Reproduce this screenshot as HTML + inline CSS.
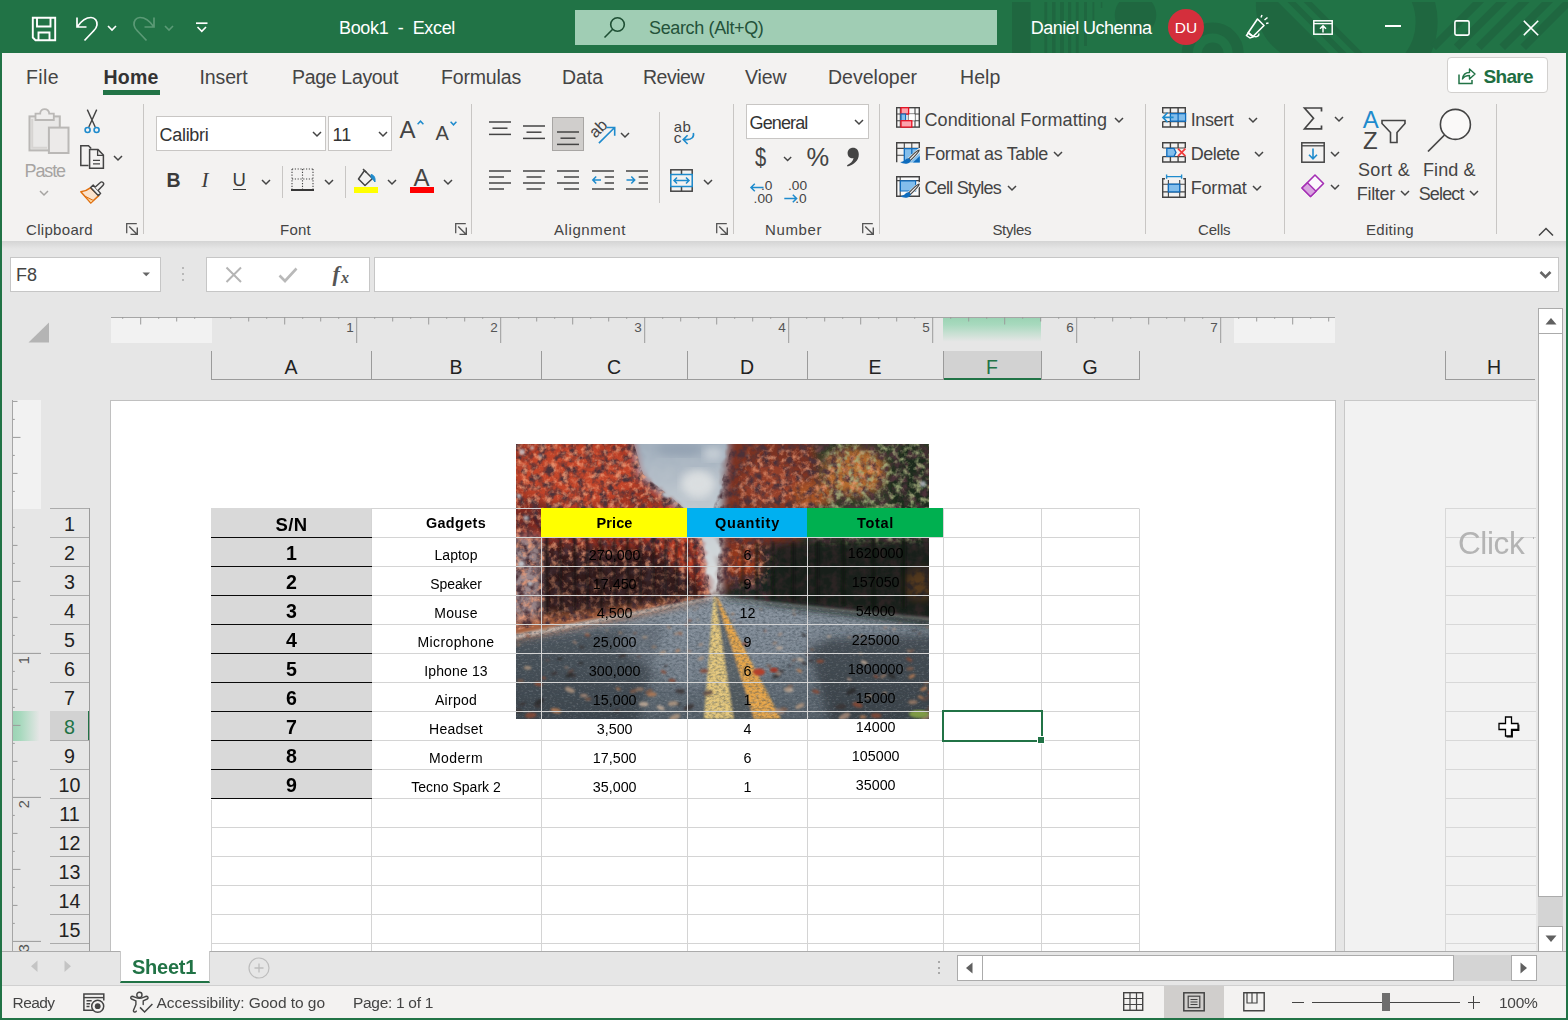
<!DOCTYPE html>
<html lang="en">
<head>
<meta charset="utf-8">
<title>Book1 - Excel</title>
<style>
*{box-sizing:border-box;margin:0;padding:0}
html,body{width:1568px;height:1020px;overflow:hidden;background:#e6e6e6}
body{font-family:"Liberation Sans",sans-serif;color:#444;position:relative}
.a{position:absolute}
.t{position:absolute;white-space:nowrap;line-height:1;color:#444}
svg{position:absolute;overflow:visible}
</style>
</head>
<body>
<!-- top -->
<div class="a" style="left:0px;top:0px;width:1568px;height:53px;background:#217346;"></div>
<svg style="left:0;top:0" width="1568" height="53" viewBox="0 0 1568 53"><defs><clipPath id="tc"><rect x="1000" y="2" width="568" height="51"/></clipPath><clipPath id="tc2"><rect x="1400" y="2" width="60" height="51"/></clipPath></defs><g clip-path="url(#tc)"><rect x="1012" y="2" width="18.5" height="51" fill="#1f6740"/><rect x="1044.4" y="2" width="2.8" height="51" fill="#1f6740"/><rect x="1052" y="2" width="3.5" height="51" fill="#1f6740"/><rect x="1060" y="2" width="3.8" height="51" fill="#1f6740"/><rect x="1068" y="2" width="3.2" height="51" fill="#1f6740"/><rect x="1075.8" y="2" width="2.8" height="51" fill="#1f6740"/><rect x="1084" y="2" width="3" height="44" fill="#1f6740"/><rect x="1092.5" y="2" width="1.8" height="18" fill="#1f6740"/><rect x="1100.8" y="2" width="1.5" height="6" fill="#1f6740"/><circle cx="1135.5" cy="15" r="20.8" fill="#1f6740"/><circle cx="1212.7" cy="53.6" r="11" fill="#1f6740"/><circle cx="1212.7" cy="53.6" r="25.5" fill="none" stroke="#1f6740" stroke-width="11"/><path d="M1256 2 H1278 L1329 53 H1281 C1262 40,1255 20,1256 2Z" fill="#1f6740"/><path d="M1287.5 2 h8 l51 51 h-8z" fill="#1f6740"/><path d="M1303.7 2 h8 l51 51 h-8z" fill="#1f6740"/><path d="M1363.6 -41 A63 63 0 0 1 1363.6 85" fill="none" stroke="#1f6740" stroke-width="22"/><path d="M1473 2 h11 l-48 48 l-5.5 -5.5z" fill="#1f6740"/><path d="M1496.4 2 h11 l-48 48 l-5.5 -5.5z" fill="#1f6740"/><path d="M1518.5 2 h11 l-48 48 l-5.5 -5.5z" fill="#1f6740"/><path d="M1542 2 h11 l-48 48 l-5.5 -5.5z" fill="#1f6740"/><path d="M1563 2 h11 l-48 48 l-5.5 -5.5z" fill="#1f6740"/></g></svg>
<svg style="left:32px;top:17px" width="24" height="24" viewBox="0 0 24 24"><path d="M0.8 0.8 H23.2 V23.2 H3.5 L0.8 20.5 Z M5 0.8 V9.5 H18.5 V0.8 M6.5 23 V15.5 H17.5 V23" fill="none" stroke="#fff" stroke-width="1.9"/></svg>
<svg style="left:75px;top:16px" width="24" height="26" viewBox="0 0 24 26"><path d="M2 1.5 V11 H11.5 M2.5 10.5 C7 4,12 1.5,16 1.5 C20 1.5,22.5 5,22 9 C21.7 12,20 13.5,18 15.5 L9.5 24.5" fill="none" stroke="#fff" stroke-width="1.7"/></svg>
<svg style="left:106.5px;top:25.0px" width="10" height="6" viewBox="0 0 10 6"><path d="M1 1 L5 5 L9 1" fill="none" stroke="#fff" stroke-width="1.6"/></svg>
<svg style="left:132px;top:16px" width="24" height="26" viewBox="0 0 24 26"><path d="M22 1.5 V11 H12.5 M21.5 10.5 C17 4,12 1.5,8 1.5 C4 1.5,1.5 5,2 9 C2.3 12,4 13.5,6 15.5 L14.5 24.5" fill="none" stroke="#5b9a76" stroke-width="1.7"/></svg>
<svg style="left:163.5px;top:25.0px" width="10" height="6" viewBox="0 0 10 6"><path d="M1 1 L5 5 L9 1" fill="none" stroke="#5b9a76" stroke-width="1.6"/></svg>
<svg style="left:196px;top:22px" width="12" height="11" viewBox="0 0 12 11"><path d="M0 1.2 H11.5" stroke="#fff" stroke-width="1.7"/><path d="M1.5 5 L5.8 9.3 L10 5" fill="none" stroke="#fff" stroke-width="1.6"/></svg>
<div class="t" style="left:339.00px;top:18.72px;font-size:18px;letter-spacing:-0.337px;color:#fff;white-space:pre;">Book1  -  Excel</div>
<div class="a" style="left:575px;top:10px;width:422px;height:35px;background:#a0cdb4;"></div>
<svg style="left:603px;top:16px" width="24" height="24" viewBox="0 0 24 24"><circle cx="14.5" cy="8.5" r="6.8" fill="none" stroke="#1e4e33" stroke-width="1.6"/><path d="M9.7 13.3 L1.5 21.5" stroke="#1e4e33" stroke-width="1.6"/></svg>
<div class="t" style="left:649.00px;top:18.72px;font-size:18px;letter-spacing:-0.360px;color:#24523a;">Search (Alt+Q)</div>
<div class="t" style="left:1030.80px;top:18.72px;font-size:18px;letter-spacing:-0.535px;color:#fff;">Daniel Uchenna</div>
<div class="a" style="left:1168px;top:9px;width:36px;height:36px;background:#d42f3c;border-radius:50%;"></div>
<div class="t" style="left:1174.81px;top:19.94px;font-size:15.5px;color:#fff;">DU</div>
<svg style="left:1244px;top:14px" width="26" height="26" viewBox="0 0 26 26"><path d="M4 19 L13.5 5 L20 11.5 L9 22.5 Z" fill="none" stroke="#fff" stroke-width="1.6" stroke-linejoin="round"/><path d="M2.5 21.5 L4.5 18.5 L9.5 22.8 L6 24 Z" fill="none" stroke="#fff" stroke-width="1.4"/><path d="M10 22 a3 3 0 0 0 5 -2.5" fill="none" stroke="#fff" stroke-width="1.4"/><path d="M17 3.5 L18 1 M20.5 6 L23.5 3.5 M22 9.5 L24.5 9" stroke="#fff" stroke-width="1.5"/></svg>
<svg style="left:1313px;top:20px" width="20" height="15" viewBox="0 0 20 15"><rect x="0.8" y="0.8" width="18.4" height="13.4" fill="none" stroke="#fff" stroke-width="1.5"/><path d="M0.8 3.6 H19.2" stroke="#fff" stroke-width="1.4"/><path d="M10 12.5 V6 M7 8.8 L10 5.8 L13 8.8" fill="none" stroke="#fff" stroke-width="1.5"/></svg>
<div class="a" style="left:1385px;top:25.3px;width:16px;height:1.5px;background:#fff;"></div>
<svg style="left:1454px;top:19.5px" width="16" height="16" viewBox="0 0 16 16"><rect x="0.9" y="0.9" width="14.2" height="14.2" rx="1.5" fill="none" stroke="#fff" stroke-width="1.6"/></svg>
<svg style="left:1523px;top:19.5px" width="16" height="16" viewBox="0 0 16 16"><path d="M0.8 0.8 L15.2 15.2 M15.2 0.8 L0.8 15.2" stroke="#fff" stroke-width="1.6"/></svg>
<div class="a" style="left:2px;top:53px;width:1564px;height:188px;background:#f3f2f1;"></div>
<div class="t" style="left:26.00px;top:68.48px;font-size:19.5px;letter-spacing:0.394px;">File</div>
<div class="t" style="left:199.50px;top:68.48px;font-size:19.5px;letter-spacing:-0.129px;">Insert</div>
<div class="t" style="left:292.00px;top:68.48px;font-size:19.5px;letter-spacing:-0.319px;">Page Layout</div>
<div class="t" style="left:441.00px;top:68.48px;font-size:19.5px;letter-spacing:-0.158px;">Formulas</div>
<div class="t" style="left:562.00px;top:68.48px;font-size:19.5px;letter-spacing:-0.048px;">Data</div>
<div class="t" style="left:643.00px;top:68.48px;font-size:19.5px;letter-spacing:-0.490px;">Review</div>
<div class="t" style="left:745.00px;top:68.48px;font-size:19.5px;letter-spacing:-0.104px;">View</div>
<div class="t" style="left:828.00px;top:68.48px;font-size:19.5px;letter-spacing:0.013px;">Developer</div>
<div class="t" style="left:960.00px;top:68.48px;font-size:19.5px;letter-spacing:0.098px;">Help</div>
<div class="t" style="left:103.50px;top:68.48px;font-size:19.5px;letter-spacing:0.205px;color:#333;font-weight:bold;">Home</div>
<div class="a" style="left:103px;top:90px;width:57px;height:5px;background:#217346;"></div>
<div class="a" style="left:1447px;top:57px;width:101px;height:36px;background:#fff;border:1px solid #d2d0ce;border-radius:4px;"></div>
<svg style="left:1458px;top:67px" width="18" height="18" viewBox="0 0 18 18"><path d="M1 7.5 V16.5 H14 V13" fill="none" stroke="#217346" stroke-width="1.5"/><path d="M4.5 12 C5 7.5,8 5.5,11.5 5.5 V2 L17 7 L11.5 12 V8.5 C8.5 8.5,6 9.5,4.5 12 Z" fill="none" stroke="#217346" stroke-width="1.4" stroke-linejoin="round"/></svg>
<div class="t" style="left:1483.50px;top:67.23px;font-size:19px;letter-spacing:-0.662px;color:#1e6e42;font-weight:bold;">Share</div>
<!-- ribbon -->
<div class="a" style="left:143px;top:104px;width:1px;height:130px;background:#c8c6c4;"></div>
<div class="a" style="left:471px;top:104px;width:1px;height:130px;background:#c8c6c4;"></div>
<div class="a" style="left:733px;top:104px;width:1px;height:130px;background:#c8c6c4;"></div>
<div class="a" style="left:879px;top:104px;width:1px;height:130px;background:#c8c6c4;"></div>
<div class="a" style="left:1145px;top:104px;width:1px;height:130px;background:#c8c6c4;"></div>
<div class="a" style="left:1284px;top:104px;width:1px;height:130px;background:#c8c6c4;"></div>
<div class="a" style="left:1496px;top:104px;width:1px;height:130px;background:#c8c6c4;"></div>
<svg style="left:28px;top:108px" width="42" height="46" viewBox="0 0 42 46"><rect x="1.5" y="8.4" width="30.3" height="34" fill="#e9e8e7" stroke="#bab8b6" stroke-width="2"/><path d="M4.2 11 V39.8 H19" fill="none" stroke="#d6d4d2" stroke-width="2"/><path d="M7.5 12 V5.6 H12.2 C12.2 -0.4,21.2 -0.4,21.2 5.6 H25.8 V12 Z" fill="#efeeed" stroke="#bab8b6" stroke-width="1.8"/><rect x="20.9" y="19.6" width="19.6" height="25.4" fill="#eceae9" stroke="#bab8b6" stroke-width="2"/></svg>
<div class="t" style="left:24.50px;top:162.22px;font-size:18px;letter-spacing:-1.106px;color:#a6a4a2;">Paste</div>
<svg style="left:39px;top:190.0px" width="10" height="6" viewBox="0 0 10 6"><path d="M1 1 L5 5 L9 1" fill="none" stroke="#a6a4a2" stroke-width="1.5"/></svg>
<svg style="left:84px;top:109px" width="16" height="25" viewBox="0 0 16 25"><path d="M3.3 0.6 L11.2 18 M12.7 0.6 L4.8 18" stroke="#444" stroke-width="1.4" fill="none"/><circle cx="3.6" cy="21" r="2.5" fill="none" stroke="#1e8bcd" stroke-width="1.6"/><circle cx="12.6" cy="21" r="2.5" fill="none" stroke="#1e8bcd" stroke-width="1.6"/></svg>
<svg style="left:80px;top:145px" width="25" height="24" viewBox="0 0 25 24"><path d="M8.5 20.6 H0.8 V0.8 H8.5 L11.2 3.5" fill="none" stroke="#444" stroke-width="1.5"/><path d="M9.6 4.6 H18 L23.4 10 V23.2 H9.6 Z" fill="#f3f2f1" stroke="#444" stroke-width="1.5"/><path d="M17.6 4.8 V10.4 H23.2" fill="none" stroke="#444" stroke-width="1.3"/><path d="M13 15.4 h7 M13 18.8 h7" stroke="#444" stroke-width="1.3"/></svg>
<svg style="left:113px;top:155.0px" width="10" height="6" viewBox="0 0 10 6"><path d="M1 1 L5 5 L9 1" fill="none" stroke="#444" stroke-width="1.5"/></svg>
<svg style="left:80px;top:181px" width="25" height="23" viewBox="0 0 25 23"><path d="M0.8 10.8 C4 10.5,7.5 9,10.3 6.8 L19 14.4 L10.8 22 Z" fill="#fbe3cc" stroke="#e0700f" stroke-width="1.5" stroke-linejoin="round"/><path d="M5.2 15.3 L13.5 19.5 L10.8 22 Z" fill="#fcd29a" stroke="#e0700f" stroke-width="1"/><path d="M10.6 6.4 L13.2 4 L20.6 12.4 L18.2 14.6 Z" fill="#f3f2f1" stroke="#444" stroke-width="1.4" stroke-linejoin="round"/><path d="M15 6.3 L20.3 1.6 a1.9 1.9 0 0 1 2.8 2.6 L18 9.6" fill="#f3f2f1" stroke="#444" stroke-width="1.4"/></svg>
<div class="t" style="left:26.00px;top:222.18px;font-size:15px;letter-spacing:0.311px;">Clipboard</div>
<svg style="left:126.3px;top:223.4px" width="12" height="12" viewBox="0 0 12 12"><path d="M0.7 10.3 V0.7 H10.8" fill="none" stroke="#555" stroke-width="1.3"/><path d="M3.2 3.4 L11 11.2 M11.3 4.6 V11.4 H4.5" fill="none" stroke="#555" stroke-width="1.4"/></svg>
<div class="a" style="left:156px;top:116px;width:170px;height:35px;background:#fff;border:1px solid #c8c6c4;"></div>
<div class="t" style="left:159.50px;top:126.22px;font-size:18px;letter-spacing:-0.288px;color:#333;">Calibri</div>
<svg style="left:312px;top:131.0px" width="10" height="6" viewBox="0 0 10 6"><path d="M1 1 L5 5 L9 1" fill="none" stroke="#444" stroke-width="1.5"/></svg>
<div class="a" style="left:328px;top:116px;width:64px;height:35px;background:#fff;border:1px solid #c8c6c4;"></div>
<div class="t" style="left:332.50px;top:126.22px;font-size:18px;color:#333;">11</div>
<svg style="left:377.5px;top:131.0px" width="10" height="6" viewBox="0 0 10 6"><path d="M1 1 L5 5 L9 1" fill="none" stroke="#444" stroke-width="1.5"/></svg>
<div class="t" style="left:399.50px;top:118.49px;font-size:24px;">A</div>
<svg style="left:417px;top:120px" width="7" height="5" viewBox="0 0 7 5"><path d="M0.6 4.2 L3.5 1.2 L6.4 4.2" fill="none" stroke="#1e8bcd" stroke-width="1.5"/></svg>
<div class="t" style="left:435.50px;top:122.84px;font-size:20px;">A</div>
<svg style="left:450px;top:121px" width="7" height="5" viewBox="0 0 7 5"><path d="M0.6 0.8 L3.5 3.8 L6.4 0.8" fill="none" stroke="#1e8bcd" stroke-width="1.5"/></svg>
<div class="t" style="left:166.50px;top:171.08px;font-size:19.5px;color:#3b3b3b;font-weight:bold;">B</div>
<div class="t" style="left:201.50px;top:170.35px;font-size:21px;color:#3b3b3b;font-style:italic;font-family:'Liberation Serif',sans-serif;">I</div>
<div class="t" style="left:232.50px;top:170.77px;font-size:18.5px;color:#3b3b3b;">U</div>
<div class="a" style="left:232.5px;top:189px;width:13.5px;height:1.4px;background:#3b3b3b;"></div>
<svg style="left:260.7px;top:179.0px" width="10" height="6" viewBox="0 0 10 6"><path d="M1 1 L5 5 L9 1" fill="none" stroke="#444" stroke-width="1.5"/></svg>
<div class="a" style="left:282px;top:166px;width:1px;height:32px;background:#c8c6c4;"></div>
<svg style="left:291px;top:168px" width="23" height="23" viewBox="0 0 23 23"><path d="M1 1 H22 M1 1 V21 M22 1 V21 M11.5 1 V21 M1 11 H22" fill="none" stroke="#444" stroke-width="1.1" stroke-dasharray="1.2 1.6"/><path d="M0 22 H23" stroke="#222" stroke-width="1.8"/></svg>
<svg style="left:324px;top:179.0px" width="10" height="6" viewBox="0 0 10 6"><path d="M1 1 L5 5 L9 1" fill="none" stroke="#444" stroke-width="1.5"/></svg>
<div class="a" style="left:345px;top:166px;width:1px;height:32px;background:#c8c6c4;"></div>
<svg style="left:354px;top:168px" width="25" height="26" viewBox="0 0 25 26"><path d="M10.5 2.5 L18.5 10.5 L11 17.5 L4.5 11 Z" fill="#f3f2f1" stroke="#444" stroke-width="1.5" stroke-linejoin="round"/><path d="M9 1 L12.5 4.5" stroke="#444" stroke-width="1.5"/><path d="M17 6.5 C20 7,21.5 9.5,21 14 C19 12,18.5 10,17 9.5 Z" fill="#1e8bcd" stroke="#1e8bcd" stroke-width="1"/><rect x="0" y="19" width="24" height="6" fill="#ffff00"/></svg>
<svg style="left:387px;top:179.0px" width="10" height="6" viewBox="0 0 10 6"><path d="M1 1 L5 5 L9 1" fill="none" stroke="#444" stroke-width="1.5"/></svg>
<div class="t" style="left:413.60px;top:166.29px;font-size:24px;">A</div>
<div class="a" style="left:410px;top:187px;width:24px;height:6px;background:#f00;"></div>
<svg style="left:443px;top:179.0px" width="10" height="6" viewBox="0 0 10 6"><path d="M1 1 L5 5 L9 1" fill="none" stroke="#444" stroke-width="1.5"/></svg>
<div class="t" style="left:280.00px;top:222.18px;font-size:15px;letter-spacing:0.246px;">Font</div>
<svg style="left:454.5px;top:223.4px" width="12" height="12" viewBox="0 0 12 12"><path d="M0.7 10.3 V0.7 H10.8" fill="none" stroke="#555" stroke-width="1.3"/><path d="M3.2 3.4 L11 11.2 M11.3 4.6 V11.4 H4.5" fill="none" stroke="#555" stroke-width="1.4"/></svg>
<svg style="left:489px;top:121px" width="23" height="15" viewBox="0 0 23 15"><path d="M0 1 h22" stroke="#444" stroke-width="1.5"/><path d="M3.5 7.2 h15" stroke="#444" stroke-width="1.5"/><path d="M0 13.4 h22" stroke="#444" stroke-width="1.5"/></svg>
<svg style="left:523px;top:125px" width="23" height="15" viewBox="0 0 23 15"><path d="M0 1 h22" stroke="#444" stroke-width="1.5"/><path d="M3.5 7.2 h15" stroke="#444" stroke-width="1.5"/><path d="M0 13.4 h22" stroke="#444" stroke-width="1.5"/></svg>
<div class="a" style="left:552px;top:117px;width:32px;height:34px;background:#d0cecc;border:1px solid #a8a6a4;"></div>
<svg style="left:557px;top:131px" width="23" height="15" viewBox="0 0 23 15"><path d="M0 1 h22" stroke="#444" stroke-width="1.5"/><path d="M3.5 7.2 h15" stroke="#444" stroke-width="1.5"/><path d="M0 13.4 h22" stroke="#444" stroke-width="1.5"/></svg>
<svg style="left:585px;top:115px" width="35" height="32" viewBox="585 115 35 32"><text transform="translate(595.6 138.8) rotate(-45)" font-family="Liberation Sans, sans-serif" font-size="16.3" fill="#444">ab</text><path d="M598.9 143.1 L614.4 127.8 M606.3 127.5 H614.7 V135.8" fill="none" stroke="#1e8bcd" stroke-width="1.6"/></svg>
<svg style="left:620px;top:131.5px" width="10" height="6" viewBox="0 0 10 6"><path d="M1 1 L5 5 L9 1" fill="none" stroke="#444" stroke-width="1.5"/></svg>
<div class="a" style="left:659px;top:112px;width:1px;height:91px;background:#c8c6c4;"></div>
<div class="t" style="left:673.80px;top:119.28px;font-size:15px;letter-spacing:0.257px;">ab</div>
<div class="t" style="left:673.80px;top:130.44px;font-size:15.5px;">c</div>
<svg style="left:682px;top:131px" width="13" height="14" viewBox="0 0 13 14"><path d="M11.3 2 C12.5 6,9.5 8.6,5 8.6 H1.5 M5.6 4.2 L1.2 8.6 L5.6 13" fill="none" stroke="#1e8bcd" stroke-width="1.6"/></svg>
<svg style="left:489px;top:170px" width="23" height="20" viewBox="0 0 23 20"><path d="M0 1 h22" stroke="#444" stroke-width="1.5"/><path d="M0 7 h15" stroke="#444" stroke-width="1.5"/><path d="M0 13 h22" stroke="#444" stroke-width="1.5"/><path d="M0 19 h15" stroke="#444" stroke-width="1.5"/></svg>
<svg style="left:523px;top:170px" width="23" height="20" viewBox="0 0 23 20"><path d="M0 1 h22" stroke="#444" stroke-width="1.5"/><path d="M3.5 7 h15" stroke="#444" stroke-width="1.5"/><path d="M0 13 h22" stroke="#444" stroke-width="1.5"/><path d="M3.5 19 h15" stroke="#444" stroke-width="1.5"/></svg>
<svg style="left:557px;top:170px" width="23" height="20" viewBox="0 0 23 20"><path d="M0 1 h22" stroke="#444" stroke-width="1.5"/><path d="M7 7 h15" stroke="#444" stroke-width="1.5"/><path d="M0 13 h22" stroke="#444" stroke-width="1.5"/><path d="M7 19 h15" stroke="#444" stroke-width="1.5"/></svg>
<svg style="left:592px;top:170px" width="23" height="20" viewBox="0 0 23 20"><path d="M0 1 h22" stroke="#444" stroke-width="1.5"/><path d="M12.7 7 h9.3" stroke="#444" stroke-width="1.5"/><path d="M12.7 13 h9.3" stroke="#444" stroke-width="1.5"/><path d="M0 19 h22" stroke="#444" stroke-width="1.5"/><path d="M9 10 H1 M4.2 6.5 L0.8 10 L4.2 13.5" fill="none" stroke="#1e8bcd" stroke-width="1.5"/></svg>
<svg style="left:626px;top:170px" width="23" height="20" viewBox="0 0 23 20"><path d="M0 1 h22" stroke="#444" stroke-width="1.5"/><path d="M12.7 7 h9.3" stroke="#444" stroke-width="1.5"/><path d="M12.7 13 h9.3" stroke="#444" stroke-width="1.5"/><path d="M0 19 h22" stroke="#444" stroke-width="1.5"/><path d="M0.5 10 H8.5 M5.3 6.5 L8.7 10 L5.3 13.5" fill="none" stroke="#1e8bcd" stroke-width="1.5"/></svg>
<svg style="left:670px;top:169px" width="23" height="23" viewBox="0 0 23 23"><rect x="0.8" y="0.8" width="21.4" height="21.4" fill="none" stroke="#444" stroke-width="1.5"/><path d="M11.5 0.8 V5.5 M11.5 17.5 V22.2" stroke="#444" stroke-width="1.5"/><rect x="0.8" y="5.5" width="21.4" height="12" fill="#f3f2f1" stroke="#1e8bcd" stroke-width="1.5"/><path d="M4 11.5 H19 M7 8.5 L4 11.5 L7 14.5 M16 8.5 L19 11.5 L16 14.5" fill="none" stroke="#1e8bcd" stroke-width="1.5"/></svg>
<svg style="left:703px;top:179.0px" width="10" height="6" viewBox="0 0 10 6"><path d="M1 1 L5 5 L9 1" fill="none" stroke="#444" stroke-width="1.5"/></svg>
<div class="t" style="left:554.00px;top:222.18px;font-size:15px;letter-spacing:0.589px;">Alignment</div>
<svg style="left:716.2px;top:223.4px" width="12" height="12" viewBox="0 0 12 12"><path d="M0.7 10.3 V0.7 H10.8" fill="none" stroke="#555" stroke-width="1.3"/><path d="M3.2 3.4 L11 11.2 M11.3 4.6 V11.4 H4.5" fill="none" stroke="#555" stroke-width="1.4"/></svg>
<div class="a" style="left:746px;top:104px;width:123px;height:35px;background:#fff;border:1px solid #c8c6c4;"></div>
<div class="t" style="left:749.50px;top:113.72px;font-size:18px;letter-spacing:-0.863px;color:#333;">General</div>
<svg style="left:854px;top:119.0px" width="10" height="6" viewBox="0 0 10 6"><path d="M1 1 L5 5 L9 1" fill="none" stroke="#444" stroke-width="1.5"/></svg>
<div class="t" style="left:755.30px;top:144.37px;font-size:26.5px;transform:scaleX(.76);transform-origin:0 50%;">$</div>
<svg style="left:783.4px;top:155.7px" width="9.2" height="5.6" viewBox="0 0 9.2 5.6"><path d="M1 1 L4.6 4.6 L8.2 1" fill="none" stroke="#444" stroke-width="1.4"/></svg>
<div class="t" style="left:806.50px;top:144.56px;font-size:25.5px;">%</div>
<svg style="left:846px;top:147px" width="14" height="21" viewBox="0 0 14 21"><path d="M7 0.8 C10.5 0.8,12.8 3.5,12.8 7.5 C12.8 13.5,8 17.5,1.5 19.6 L1 18.2 C4.5 16.5,7 14,7.6 11.2 C4.5 11.8,1.6 9.6,1.6 6.2 C1.6 3,4 0.8,7 0.8 Z" fill="#444"/></svg>
<div class="t" style="left:761.00px;top:179.41px;font-size:13.7px;">.0</div>
<div class="t" style="left:753.60px;top:191.61px;font-size:13.7px;">.00</div>
<svg style="left:750px;top:183px" width="14" height="9" viewBox="0 0 14 9"><path d="M13.5 4.5 H1 M4.8 0.8 L1 4.5 L4.8 8.2" fill="none" stroke="#1e8bcd" stroke-width="1.5"/></svg>
<div class="t" style="left:788.00px;top:179.41px;font-size:13.7px;">.00</div>
<div class="t" style="left:795.30px;top:191.61px;font-size:13.7px;">.0</div>
<svg style="left:784px;top:194px" width="14" height="9" viewBox="0 0 14 9"><path d="M0.3 4.5 H12.6 M8.8 0.8 L12.6 4.5 L8.8 8.2" fill="none" stroke="#1e8bcd" stroke-width="1.5"/></svg>
<div class="t" style="left:765.00px;top:222.18px;font-size:15px;letter-spacing:0.608px;">Number</div>
<svg style="left:862px;top:223.4px" width="12" height="12" viewBox="0 0 12 12"><path d="M0.7 10.3 V0.7 H10.8" fill="none" stroke="#555" stroke-width="1.3"/><path d="M3.2 3.4 L11 11.2 M11.3 4.6 V11.4 H4.5" fill="none" stroke="#555" stroke-width="1.4"/></svg>
<svg style="left:896px;top:107.3px" width="24" height="21" viewBox="0 0 24 21"><rect x="0.7" y="0.7" width="22.6" height="19.4" fill="#fafafa" stroke="#444" stroke-width="1.4"/><path d="M0.7 7 H23.3 M0.7 13.7 H23.3 M4.3 0.7 V20.1 M12.4 0.7 V20.1 M19 0.7 V20.1" stroke="#444" stroke-width="1.1"/><rect x="12.6" y="7.2" width="6.2" height="6.3" fill="#fff"/><rect x="5" y="0.7" width="7.6" height="6.3" fill="#fba3ac" stroke="#e81123" stroke-width="1.3"/><rect x="5" y="7" width="4.6" height="6.7" fill="#83beec" stroke="#0f6cbd" stroke-width="1.2"/><rect x="5" y="13.7" width="10.8" height="6.4" fill="#fba3ac" stroke="#e81123" stroke-width="1.3"/></svg>
<div class="t" style="left:924.50px;top:110.72px;font-size:18px;letter-spacing:0.064px;">Conditional Formatting</div>
<svg style="left:1113.5px;top:116.5px" width="10" height="6" viewBox="0 0 10 6"><path d="M1 1 L5 5 L9 1" fill="none" stroke="#444" stroke-width="1.5"/></svg>
<svg style="left:896px;top:141.6px" width="24" height="22" viewBox="0 0 24 22"><path d="M0.7 20.3 V0.7 H23.3 V6" fill="none" stroke="#444" stroke-width="1.4"/><path d="M0.7 6.4 H23.3 M0.7 13.2 H8 M8.3 0.7 V6.4 M15.8 0.7 V6.4" stroke="#444" stroke-width="1.1"/><path d="M8.3 6.6 H23.8 V20.6 H8.3Z" fill="#83beec"/><path d="M8.3 20.6 V6.6 H23.8 M15.8 6.6 V12" fill="none" stroke="#0f6cbd" stroke-width="1.3"/><path d="M17 20.6 L23.8 14 V20.6Z" fill="#0f6cbd"/><path d="M23.4 8.2 L13.4 17.6" stroke="#f3f2f1" stroke-width="4.2" stroke-linecap="round"/><path d="M23.2 8 C22 8.2,16 13.5,12.6 17.2 L14.2 18.6 C18 15,23 10,23.2 8Z" fill="#f3f2f1" stroke="#444" stroke-width="1.2" stroke-linejoin="round"/><path d="M12.8 16.2 C9.5 15.8,9.5 19.5,4.2 20 C7.5 22.6,14.6 22.4,14.8 17.9 Z" fill="#0f6cbd"/></svg>
<div class="t" style="left:924.50px;top:144.72px;font-size:18px;letter-spacing:-0.348px;">Format as Table</div>
<svg style="left:1053px;top:150.5px" width="10" height="6" viewBox="0 0 10 6"><path d="M1 1 L5 5 L9 1" fill="none" stroke="#444" stroke-width="1.5"/></svg>
<svg style="left:896px;top:175.5px" width="24" height="22" viewBox="0 0 24 22"><path d="M0.7 0.7 H23.3 V20.2 H0.7Z" fill="#fafafa" stroke="#444" stroke-width="1.4"/><path d="M0.7 4.6 H23.3 M4.2 0.7 V20.2" stroke="#444" stroke-width="1.1"/><path d="M4.4 4.8 H19.6 V15 H4.4Z" fill="#83beec" stroke="#0f6cbd" stroke-width="1.2"/><path d="M23.4 8.2 L13.4 17.6" stroke="#f3f2f1" stroke-width="4.2" stroke-linecap="round"/><path d="M23.2 8 C22 8.2,16 13.5,12.6 17.2 L14.2 18.6 C18 15,23 10,23.2 8Z" fill="#f3f2f1" stroke="#444" stroke-width="1.2" stroke-linejoin="round"/><path d="M12.8 16.2 C9.5 15.8,9.5 19.5,4.2 20 C7.5 22.6,14.6 22.4,14.8 17.9 Z" fill="#0f6cbd"/></svg>
<div class="t" style="left:924.50px;top:178.72px;font-size:18px;letter-spacing:-0.775px;">Cell Styles</div>
<svg style="left:1007px;top:184.5px" width="10" height="6" viewBox="0 0 10 6"><path d="M1 1 L5 5 L9 1" fill="none" stroke="#444" stroke-width="1.5"/></svg>
<div class="t" style="left:992.50px;top:222.18px;font-size:15px;letter-spacing:-0.392px;">Styles</div>
<svg style="left:1162px;top:107.3px" width="24" height="21" viewBox="0 0 24 21"><path d="M0.7 6 V0.7 H23.3 V6 M0.7 14.6 V20 H23.3 V14.6 M8.4 0.7 V6 M16.1 0.7 V6 M8.4 14.6 V20 M16.1 14.6 V20" fill="none" stroke="#444" stroke-width="1.4"/><path d="M0.7 6 H23.3 M0.7 14.6 H23.3" stroke="#444" stroke-width="1.2"/><rect x="8.4" y="6.6" width="15.2" height="7.6" fill="#83beec" stroke="#0f6cbd" stroke-width="1.3"/><path d="M16.1 6.6 V14.2" stroke="#0f6cbd" stroke-width="1.2"/><path d="M11.6 10.4 H1.2 M5.6 5.6 L0.9 10.4 L5.6 15.2" fill="none" stroke="#1e8bcd" stroke-width="1.6"/></svg>
<div class="t" style="left:1190.70px;top:110.72px;font-size:18px;letter-spacing:-0.370px;">Insert</div>
<svg style="left:1248px;top:116.5px" width="10" height="6" viewBox="0 0 10 6"><path d="M1 1 L5 5 L9 1" fill="none" stroke="#444" stroke-width="1.5"/></svg>
<svg style="left:1162px;top:141.5px" width="24" height="21" viewBox="0 0 24 21"><path d="M0.7 6 V0.7 H23.3 V6 M0.7 14.6 V20 H23.3 V14.6 M8.4 0.7 V6 M16.1 0.7 V6 M8.4 14.6 V20 M16.1 14.6 V20" fill="none" stroke="#444" stroke-width="1.4"/><path d="M0.7 6 H23.3 M0.7 14.6 H23.3" stroke="#444" stroke-width="1.2"/><path d="M4.8 6.4 H12 L14 10.4 L12 14.4 H4.8Z" fill="#83beec" stroke="#0f6cbd" stroke-width="1.3"/><path d="M16 6.6 L23.4 14.2 M23.4 6.6 L16 14.2" stroke="#f03a3a" stroke-width="1.7"/></svg>
<div class="t" style="left:1190.70px;top:144.72px;font-size:18px;letter-spacing:-0.522px;">Delete</div>
<svg style="left:1254px;top:150.5px" width="10" height="6" viewBox="0 0 10 6"><path d="M1 1 L5 5 L9 1" fill="none" stroke="#444" stroke-width="1.5"/></svg>
<svg style="left:1162px;top:173.6px" width="24" height="24" viewBox="0 0 24 24"><path d="M4.6 2.6 H19.6 M4.6 0.4 V4.8 M19.6 0.4 V4.8" stroke="#1e8bcd" stroke-width="1.4"/><path d="M3 4.7 H0.7 V23.3 H23.3 V4.7 H21.2" fill="none" stroke="#444" stroke-width="1.4"/><path d="M0.7 10.2 H23.3 M0.7 17.9 H23.3 M6.4 6 V23.3 M17.7 6 V23.3" stroke="#444" stroke-width="1.1"/><rect x="6.4" y="10.2" width="11.3" height="7.7" fill="#83beec" stroke="#0f6cbd" stroke-width="1.3"/></svg>
<div class="t" style="left:1190.70px;top:178.72px;font-size:18px;letter-spacing:-0.184px;">Format</div>
<svg style="left:1252px;top:184.5px" width="10" height="6" viewBox="0 0 10 6"><path d="M1 1 L5 5 L9 1" fill="none" stroke="#444" stroke-width="1.5"/></svg>
<div class="t" style="left:1198.00px;top:222.18px;font-size:15px;letter-spacing:-0.188px;">Cells</div>
<svg style="left:1303px;top:107px" width="20" height="23" viewBox="0 0 20 23"><path d="M18.5 4.5 V1 H1.5 L10.5 11.3 L1.5 21.8 H18.5 V18.5" fill="none" stroke="#444" stroke-width="1.7"/></svg>
<svg style="left:1334px;top:116.0px" width="10" height="6" viewBox="0 0 10 6"><path d="M1 1 L5 5 L9 1" fill="none" stroke="#444" stroke-width="1.5"/></svg>
<svg style="left:1301px;top:141.5px" width="24" height="21" viewBox="0 0 24 21"><rect x="0.8" y="0.8" width="22.4" height="19.4" fill="#f3f2f1" stroke="#444" stroke-width="1.5"/><path d="M0.8 3.8 H23.2" stroke="#444" stroke-width="1.3"/><path d="M12 6.5 V16.5 M8 12.8 L12 16.8 L16 12.8" fill="none" stroke="#1e8bcd" stroke-width="1.6"/></svg>
<svg style="left:1330px;top:150.5px" width="10" height="6" viewBox="0 0 10 6"><path d="M1 1 L5 5 L9 1" fill="none" stroke="#444" stroke-width="1.5"/></svg>
<svg style="left:1301px;top:174px" width="24" height="24" viewBox="0 0 24 24"><path d="M14 1 L22.5 9.5 L9.5 22.5 L1 14 Z" fill="#fbf8fc" stroke="#a42eb4" stroke-width="1.6" stroke-linejoin="round"/><path d="M6.5 8.8 L15 17.3 L9.5 22.5 L1 14 Z" fill="#d8a4e0" stroke="#a42eb4" stroke-width="1.4" stroke-linejoin="round"/></svg>
<svg style="left:1330px;top:184.0px" width="10" height="6" viewBox="0 0 10 6"><path d="M1 1 L5 5 L9 1" fill="none" stroke="#444" stroke-width="1.5"/></svg>
<div class="t" style="left:1362.80px;top:107.89px;font-size:24px;color:#1e8bcd;">A</div>
<div class="t" style="left:1363.00px;top:128.89px;font-size:24px;">Z</div>
<svg style="left:1381px;top:119px" width="25" height="25" viewBox="0 0 25 25"><path d="M1 1.5 H24 V4.5 L16 13.5 V23.5 H9.5 V13.5 L1 4.5 Z" fill="none" stroke="#444" stroke-width="1.6"/></svg>
<div class="t" style="left:1358.00px;top:160.72px;font-size:18px;letter-spacing:0.330px;">Sort &amp;</div>
<div class="t" style="left:1356.80px;top:184.72px;font-size:18px;letter-spacing:-0.333px;">Filter</div>
<svg style="left:1399.5px;top:189.5px" width="10" height="6" viewBox="0 0 10 6"><path d="M1 1 L5 5 L9 1" fill="none" stroke="#444" stroke-width="1.5"/></svg>
<svg style="left:1426px;top:108px" width="46" height="46" viewBox="0 0 46 46"><circle cx="29.4" cy="16.4" r="15" fill="#faf9f8" stroke="#444" stroke-width="1.6"/><path d="M18.5 27 L2 43.5" stroke="#444" stroke-width="1.7"/></svg>
<div class="t" style="left:1423.00px;top:160.72px;font-size:18px;letter-spacing:0.096px;">Find &amp;</div>
<div class="t" style="left:1418.70px;top:184.72px;font-size:18px;letter-spacing:-0.838px;">Select</div>
<svg style="left:1469px;top:189.5px" width="10" height="6" viewBox="0 0 10 6"><path d="M1 1 L5 5 L9 1" fill="none" stroke="#444" stroke-width="1.5"/></svg>
<div class="t" style="left:1366.00px;top:222.18px;font-size:15px;letter-spacing:0.305px;">Editing</div>
<svg style="left:1538px;top:227px" width="16" height="10" viewBox="0 0 16 10"><path d="M1 8.5 L8 1.5 L15 8.5" fill="none" stroke="#444" stroke-width="1.5"/></svg>
<div class="a" style="left:2px;top:241px;width:1564px;height:8px;background:linear-gradient(#d4d4d4,#e6e6e6);"></div>
<!-- fbar -->
<div class="a" style="left:10px;top:257px;width:151px;height:35px;background:#fff;border:1px solid #c6c6c6;"></div>
<div class="t" style="left:16.00px;top:266.22px;font-size:18px;letter-spacing:-0.003px;">F8</div>
<svg style="left:142px;top:272px" width="9" height="5" viewBox="0 0 9 5"><path d="M0.5 0.5 H8 L4.25 4.2 Z" fill="#666"/></svg>
<div class="a" style="left:181.5px;top:267px;width:2px;height:2px;background:#b8b8b8;"></div>
<div class="a" style="left:181.5px;top:273px;width:2px;height:2px;background:#b8b8b8;"></div>
<div class="a" style="left:181.5px;top:279px;width:2px;height:2px;background:#b8b8b8;"></div>
<div class="a" style="left:206px;top:257px;width:164px;height:35px;background:#fff;border:1px solid #c6c6c6;"></div>
<svg style="left:225px;top:266px" width="18" height="18" viewBox="0 0 18 18"><path d="M1.5 1.5 L16 16 M16 1.5 L1.5 16" stroke="#b4b4b4" stroke-width="2"/></svg>
<svg style="left:278px;top:266px" width="20" height="18" viewBox="0 0 20 18"><path d="M1.5 9.5 L7 15 L18.5 2.5" fill="none" stroke="#b9b9b9" stroke-width="2.6"/></svg>
<div class="t" style="left:332.50px;top:262.76px;font-size:22px;color:#555;font-weight:bold;font-style:italic;font-family:'Liberation Serif',sans-serif;">f</div>
<div class="t" style="left:341.00px;top:269.69px;font-size:16px;color:#555;font-weight:bold;font-style:italic;font-family:'Liberation Serif',sans-serif;">x</div>
<div class="a" style="left:374px;top:257px;width:1185px;height:35px;background:#fff;border:1px solid #c6c6c6;"></div>
<svg style="left:1539px;top:270px" width="13" height="10" viewBox="0 0 13 10"><path d="M1.5 2 L6.5 7 L11.5 2" fill="none" stroke="#666" stroke-width="2.6"/></svg>
<!-- sheet -->
<svg style="left:28px;top:322px" width="22" height="21" viewBox="0 0 22 21"><path d="M21 0.5 V20.5 H0.5 Z" fill="#b4b4b4"/></svg>
<div class="a" style="left:111px;top:317px;width:1224px;height:26px;background:#e6e6e6;"></div>
<div class="a" style="left:111px;top:317px;width:101px;height:26px;background:#f2f2f2;"></div>
<div class="a" style="left:1234px;top:317px;width:101px;height:26px;background:#f2f2f2;"></div>
<div class="a" style="left:943px;top:317px;width:98px;height:26px;background:linear-gradient(#9ad3b3,#a8d9be 30%,#e6e6e6 95%);"></div>
<div class="a" style="left:111px;top:317px;width:1224px;height:1px;background:#a6a6a6;"></div>
<svg style="left:0px;top:317px" width="1568" height="26" viewBox="0 0 1568 26"><path d="M122.7 0 v1.8" stroke="#9a9a9a" stroke-width="1"/><path d="M140.7 0 v7.5" stroke="#9a9a9a" stroke-width="1"/><path d="M158.7 0 v1.8" stroke="#9a9a9a" stroke-width="1"/><path d="M176.7 0 v4.5" stroke="#9a9a9a" stroke-width="1"/><path d="M194.7 0 v1.8" stroke="#9a9a9a" stroke-width="1"/><path d="M230.7 0 v1.8" stroke="#9a9a9a" stroke-width="1"/><path d="M248.7 0 v4.5" stroke="#9a9a9a" stroke-width="1"/><path d="M266.7 0 v1.8" stroke="#9a9a9a" stroke-width="1"/><path d="M284.7 0 v7.5" stroke="#9a9a9a" stroke-width="1"/><path d="M302.7 0 v1.8" stroke="#9a9a9a" stroke-width="1"/><path d="M320.7 0 v4.5" stroke="#9a9a9a" stroke-width="1"/><path d="M338.7 0 v1.8" stroke="#9a9a9a" stroke-width="1"/><path d="M356.7 0 v26" stroke="#9a9a9a" stroke-width="1"/><path d="M374.7 0 v1.8" stroke="#9a9a9a" stroke-width="1"/><path d="M392.7 0 v4.5" stroke="#9a9a9a" stroke-width="1"/><path d="M410.7 0 v1.8" stroke="#9a9a9a" stroke-width="1"/><path d="M428.7 0 v7.5" stroke="#9a9a9a" stroke-width="1"/><path d="M446.7 0 v1.8" stroke="#9a9a9a" stroke-width="1"/><path d="M464.7 0 v4.5" stroke="#9a9a9a" stroke-width="1"/><path d="M482.7 0 v1.8" stroke="#9a9a9a" stroke-width="1"/><path d="M500.7 0 v26" stroke="#9a9a9a" stroke-width="1"/><path d="M518.7 0 v1.8" stroke="#9a9a9a" stroke-width="1"/><path d="M536.7 0 v4.5" stroke="#9a9a9a" stroke-width="1"/><path d="M554.7 0 v1.8" stroke="#9a9a9a" stroke-width="1"/><path d="M572.7 0 v7.5" stroke="#9a9a9a" stroke-width="1"/><path d="M590.7 0 v1.8" stroke="#9a9a9a" stroke-width="1"/><path d="M608.7 0 v4.5" stroke="#9a9a9a" stroke-width="1"/><path d="M626.7 0 v1.8" stroke="#9a9a9a" stroke-width="1"/><path d="M644.7 0 v26" stroke="#9a9a9a" stroke-width="1"/><path d="M662.7 0 v1.8" stroke="#9a9a9a" stroke-width="1"/><path d="M680.7 0 v4.5" stroke="#9a9a9a" stroke-width="1"/><path d="M698.7 0 v1.8" stroke="#9a9a9a" stroke-width="1"/><path d="M716.7 0 v7.5" stroke="#9a9a9a" stroke-width="1"/><path d="M734.7 0 v1.8" stroke="#9a9a9a" stroke-width="1"/><path d="M752.7 0 v4.5" stroke="#9a9a9a" stroke-width="1"/><path d="M770.7 0 v1.8" stroke="#9a9a9a" stroke-width="1"/><path d="M788.7 0 v26" stroke="#9a9a9a" stroke-width="1"/><path d="M806.7 0 v1.8" stroke="#9a9a9a" stroke-width="1"/><path d="M824.7 0 v4.5" stroke="#9a9a9a" stroke-width="1"/><path d="M842.7 0 v1.8" stroke="#9a9a9a" stroke-width="1"/><path d="M860.7 0 v7.5" stroke="#9a9a9a" stroke-width="1"/><path d="M878.7 0 v1.8" stroke="#9a9a9a" stroke-width="1"/><path d="M896.7 0 v4.5" stroke="#9a9a9a" stroke-width="1"/><path d="M914.7 0 v1.8" stroke="#9a9a9a" stroke-width="1"/><path d="M932.7 0 v26" stroke="#9a9a9a" stroke-width="1"/><path d="M950.7 0 v1.8" stroke="#9a9a9a" stroke-width="1"/><path d="M968.7 0 v4.5" stroke="#9a9a9a" stroke-width="1"/><path d="M986.7 0 v1.8" stroke="#9a9a9a" stroke-width="1"/><path d="M1004.7 0 v7.5" stroke="#9a9a9a" stroke-width="1"/><path d="M1022.7 0 v1.8" stroke="#9a9a9a" stroke-width="1"/><path d="M1040.7 0 v4.5" stroke="#9a9a9a" stroke-width="1"/><path d="M1058.7 0 v1.8" stroke="#9a9a9a" stroke-width="1"/><path d="M1076.7 0 v26" stroke="#9a9a9a" stroke-width="1"/><path d="M1094.7 0 v1.8" stroke="#9a9a9a" stroke-width="1"/><path d="M1112.7 0 v4.5" stroke="#9a9a9a" stroke-width="1"/><path d="M1130.7 0 v1.8" stroke="#9a9a9a" stroke-width="1"/><path d="M1148.7 0 v7.5" stroke="#9a9a9a" stroke-width="1"/><path d="M1166.7 0 v1.8" stroke="#9a9a9a" stroke-width="1"/><path d="M1184.7 0 v4.5" stroke="#9a9a9a" stroke-width="1"/><path d="M1202.7 0 v1.8" stroke="#9a9a9a" stroke-width="1"/><path d="M1220.7 0 v26" stroke="#9a9a9a" stroke-width="1"/><path d="M1238.7 0 v1.8" stroke="#9a9a9a" stroke-width="1"/><path d="M1256.7 0 v4.5" stroke="#9a9a9a" stroke-width="1"/><path d="M1274.7 0 v1.8" stroke="#9a9a9a" stroke-width="1"/><path d="M1292.7 0 v7.5" stroke="#9a9a9a" stroke-width="1"/><path d="M1310.7 0 v1.8" stroke="#9a9a9a" stroke-width="1"/><path d="M1328.7 0 v4.5" stroke="#9a9a9a" stroke-width="1"/></svg>
<div class="t" style="left:346.19px;top:320.91px;font-size:13.5px;color:#555;">1</div>
<div class="t" style="left:490.19px;top:320.91px;font-size:13.5px;color:#555;">2</div>
<div class="t" style="left:634.19px;top:320.91px;font-size:13.5px;color:#555;">3</div>
<div class="t" style="left:778.19px;top:320.91px;font-size:13.5px;color:#555;">4</div>
<div class="t" style="left:922.19px;top:320.91px;font-size:13.5px;color:#555;">5</div>
<div class="t" style="left:1066.19px;top:320.91px;font-size:13.5px;color:#555;">6</div>
<div class="t" style="left:1210.19px;top:320.91px;font-size:13.5px;color:#555;">7</div>
<div class="t" style="left:284.50px;top:358.48px;font-size:19.5px;color:#222;">A</div>
<div class="t" style="left:449.50px;top:358.48px;font-size:19.5px;color:#222;">B</div>
<div class="t" style="left:606.96px;top:358.48px;font-size:19.5px;color:#222;">C</div>
<div class="t" style="left:739.96px;top:358.48px;font-size:19.5px;color:#222;">D</div>
<div class="t" style="left:868.50px;top:358.48px;font-size:19.5px;color:#222;">E</div>
<div class="a" style="left:943px;top:351px;width:98px;height:28px;background:#d2d2d2;"></div>
<div class="a" style="left:943px;top:377.5px;width:99px;height:2.5px;background:#217346;"></div>
<div class="t" style="left:986.04px;top:358.48px;font-size:19.5px;color:#217346;">F</div>
<div class="t" style="left:1082.41px;top:358.48px;font-size:19.5px;color:#222;">G</div>
<div class="a" style="left:211px;top:379px;width:732px;height:1px;background:#9b9b9b;"></div>
<div class="a" style="left:1041px;top:379px;width:99px;height:1px;background:#9b9b9b;"></div>
<div class="a" style="left:211px;top:351px;width:1px;height:29px;background:#9b9b9b;"></div>
<div class="a" style="left:371px;top:351px;width:1px;height:29px;background:#9b9b9b;"></div>
<div class="a" style="left:541px;top:351px;width:1px;height:29px;background:#9b9b9b;"></div>
<div class="a" style="left:687px;top:351px;width:1px;height:29px;background:#9b9b9b;"></div>
<div class="a" style="left:807px;top:351px;width:1px;height:29px;background:#9b9b9b;"></div>
<div class="a" style="left:943px;top:351px;width:1px;height:29px;background:#9b9b9b;"></div>
<div class="a" style="left:1041px;top:351px;width:1px;height:29px;background:#9b9b9b;"></div>
<div class="a" style="left:1139px;top:351px;width:1px;height:29px;background:#9b9b9b;"></div>
<div class="a" style="left:1445px;top:351px;width:1px;height:29px;background:#9b9b9b;"></div>
<div class="a" style="left:1445px;top:379px;width:90px;height:1px;background:#9b9b9b;"></div>
<div class="t" style="left:1486.96px;top:358.48px;font-size:19.5px;color:#222;">H</div>
<div class="a" style="left:110px;top:400px;width:1226px;height:552px;background:#fff;border:1px solid #c0c0c0;border-bottom:none;"></div>
<div class="a" style="left:1344px;top:400px;width:192px;height:552px;background:#f2f2f2;border:1px solid #c8c8c8;border-bottom:none;border-right:none;"></div>
<div class="a" style="left:12px;top:400px;width:29px;height:551px;background:#e6e6e6;"></div>
<div class="a" style="left:12px;top:400px;width:29px;height:109px;background:#f2f2f2;"></div>
<div class="a" style="left:12px;top:710.5px;width:29px;height:30px;background:linear-gradient(90deg,#9ad3b3,#a8d9be 30%,#e6e6e6 95%);"></div>
<div class="a" style="left:12px;top:400px;width:1px;height:551px;background:#a6a6a6;"></div>
<svg style="left:13px;top:0px" width="28" height="951" viewBox="0 0 28 951"><path d="M0 401.4 h4.5" stroke="#9a9a9a" stroke-width="1"/><path d="M0 419.4 h1.8" stroke="#9a9a9a" stroke-width="1"/><path d="M0 437.4 h7.5" stroke="#9a9a9a" stroke-width="1"/><path d="M0 455.4 h1.8" stroke="#9a9a9a" stroke-width="1"/><path d="M0 473.4 h4.5" stroke="#9a9a9a" stroke-width="1"/><path d="M0 491.4 h1.8" stroke="#9a9a9a" stroke-width="1"/><path d="M0 527.4 h1.8" stroke="#9a9a9a" stroke-width="1"/><path d="M0 545.4 h4.5" stroke="#9a9a9a" stroke-width="1"/><path d="M0 563.4 h1.8" stroke="#9a9a9a" stroke-width="1"/><path d="M0 581.4 h7.5" stroke="#9a9a9a" stroke-width="1"/><path d="M0 599.4 h1.8" stroke="#9a9a9a" stroke-width="1"/><path d="M0 617.4 h4.5" stroke="#9a9a9a" stroke-width="1"/><path d="M0 635.4 h1.8" stroke="#9a9a9a" stroke-width="1"/><path d="M0 653.4 h28" stroke="#9a9a9a" stroke-width="1"/><path d="M0 671.4 h1.8" stroke="#9a9a9a" stroke-width="1"/><path d="M0 689.4 h4.5" stroke="#9a9a9a" stroke-width="1"/><path d="M0 707.4 h1.8" stroke="#9a9a9a" stroke-width="1"/><path d="M0 725.4 h7.5" stroke="#9a9a9a" stroke-width="1"/><path d="M0 743.4 h1.8" stroke="#9a9a9a" stroke-width="1"/><path d="M0 761.4 h4.5" stroke="#9a9a9a" stroke-width="1"/><path d="M0 779.4 h1.8" stroke="#9a9a9a" stroke-width="1"/><path d="M0 797.4 h28" stroke="#9a9a9a" stroke-width="1"/><path d="M0 815.4 h1.8" stroke="#9a9a9a" stroke-width="1"/><path d="M0 833.4 h4.5" stroke="#9a9a9a" stroke-width="1"/><path d="M0 851.4 h1.8" stroke="#9a9a9a" stroke-width="1"/><path d="M0 869.4 h7.5" stroke="#9a9a9a" stroke-width="1"/><path d="M0 887.4 h1.8" stroke="#9a9a9a" stroke-width="1"/><path d="M0 905.4 h4.5" stroke="#9a9a9a" stroke-width="1"/><path d="M0 923.4 h1.8" stroke="#9a9a9a" stroke-width="1"/><path d="M0 941.4 h28" stroke="#9a9a9a" stroke-width="1"/></svg>
<div class="t" style="left:17px;top:653.4px;font-size:14.5px;color:#555;transform:rotate(-90deg);transform-origin:50% 50%;width:14px;text-align:center">1</div>
<div class="t" style="left:17px;top:797.4px;font-size:14.5px;color:#555;transform:rotate(-90deg);transform-origin:50% 50%;width:14px;text-align:center">2</div>
<div class="t" style="left:17px;top:941.4px;font-size:14.5px;color:#555;transform:rotate(-90deg);transform-origin:50% 50%;width:14px;text-align:center">3</div>
<div class="a" style="left:50px;top:537px;width:39px;height:1px;background:#ababab;"></div>
<div class="t" style="left:64.02px;top:515.19px;font-size:19.7px;color:#222;">1</div>
<div class="a" style="left:50px;top:566px;width:39px;height:1px;background:#ababab;"></div>
<div class="t" style="left:64.02px;top:544.19px;font-size:19.7px;color:#222;">2</div>
<div class="a" style="left:50px;top:595px;width:39px;height:1px;background:#ababab;"></div>
<div class="t" style="left:64.02px;top:573.19px;font-size:19.7px;color:#222;">3</div>
<div class="a" style="left:50px;top:624px;width:39px;height:1px;background:#ababab;"></div>
<div class="t" style="left:64.02px;top:602.19px;font-size:19.7px;color:#222;">4</div>
<div class="a" style="left:50px;top:653px;width:39px;height:1px;background:#ababab;"></div>
<div class="t" style="left:64.02px;top:631.19px;font-size:19.7px;color:#222;">5</div>
<div class="a" style="left:50px;top:682px;width:39px;height:1px;background:#ababab;"></div>
<div class="t" style="left:64.02px;top:660.19px;font-size:19.7px;color:#222;">6</div>
<div class="a" style="left:50px;top:711px;width:39px;height:1px;background:#ababab;"></div>
<div class="t" style="left:64.02px;top:689.19px;font-size:19.7px;color:#222;">7</div>
<div class="a" style="left:50px;top:711px;width:39px;height:29px;background:#d2d2d2;"></div>
<div class="a" style="left:87.5px;top:711px;width:2.5px;height:30px;background:#217346;"></div>
<div class="a" style="left:50px;top:740px;width:39px;height:1px;background:#ababab;"></div>
<div class="t" style="left:64.02px;top:718.19px;font-size:19.7px;color:#217346;">8</div>
<div class="a" style="left:50px;top:769px;width:39px;height:1px;background:#ababab;"></div>
<div class="t" style="left:64.02px;top:747.19px;font-size:19.7px;color:#222;">9</div>
<div class="a" style="left:50px;top:798px;width:39px;height:1px;background:#ababab;"></div>
<div class="t" style="left:58.54px;top:776.19px;font-size:19.7px;color:#222;">10</div>
<div class="a" style="left:50px;top:827px;width:39px;height:1px;background:#ababab;"></div>
<div class="t" style="left:59.27px;top:805.19px;font-size:19.7px;color:#222;">11</div>
<div class="a" style="left:50px;top:856px;width:39px;height:1px;background:#ababab;"></div>
<div class="t" style="left:58.54px;top:834.19px;font-size:19.7px;color:#222;">12</div>
<div class="a" style="left:50px;top:885px;width:39px;height:1px;background:#ababab;"></div>
<div class="t" style="left:58.54px;top:863.19px;font-size:19.7px;color:#222;">13</div>
<div class="a" style="left:50px;top:914px;width:39px;height:1px;background:#ababab;"></div>
<div class="t" style="left:58.54px;top:892.19px;font-size:19.7px;color:#222;">14</div>
<div class="a" style="left:50px;top:943px;width:39px;height:1px;background:#ababab;"></div>
<div class="t" style="left:58.54px;top:921.19px;font-size:19.7px;color:#222;">15</div>
<div class="a" style="left:50px;top:972px;width:39px;height:1px;background:#ababab;"></div>
<div class="a" style="left:50px;top:508px;width:39px;height:1px;background:#ababab;"></div>
<div class="a" style="left:89px;top:508px;width:1px;height:443px;background:#9b9b9b;"></div>
<svg style="left:516px;top:444px" width="413" height="275" viewBox="0 0 413 275"><defs>
<filter id="b6" x="-10%" y="-10%" width="120%" height="120%"><feGaussianBlur stdDeviation="4"/></filter>
<filter id="b3" x="-10%" y="-10%" width="120%" height="120%"><feGaussianBlur stdDeviation="2"/></filter>
<filter id="rough" x="-10%" y="-10%" width="120%" height="120%"><feTurbulence type="fractalNoise" baseFrequency="0.09" numOctaves="3" seed="8" result="t"/><feDisplacementMap in="SourceGraphic" in2="t" scale="16" xChannelSelector="R" yChannelSelector="G"/><feGaussianBlur stdDeviation="0.9"/></filter>
<filter id="b1" x="-10%" y="-10%" width="120%" height="120%"><feGaussianBlur stdDeviation="0.8"/></filter>
<filter id="nzD" x="0" y="0" width="100%" height="100%"><feTurbulence type="fractalNoise" baseFrequency="0.13" numOctaves="3" seed="4"/><feColorMatrix type="matrix" values="0 0 0 0 0.07  0 0 0 0 0.03  0 0 0 0 0.04  2.8 0 0 0 -1.1"/><feGaussianBlur stdDeviation="0.5"/></filter>
<filter id="nzL" x="0" y="0" width="100%" height="100%"><feTurbulence type="fractalNoise" baseFrequency="0.17" numOctaves="3" seed="11"/><feColorMatrix type="matrix" values="0 0 0 0 .90  0 0 0 0 .36  0 0 0 0 .20  0 3 0 0 -1.4"/><feGaussianBlur stdDeviation="0.5"/></filter>
<filter id="nzG" x="0" y="0" width="100%" height="100%"><feTurbulence type="fractalNoise" baseFrequency="0.15" numOctaves="3" seed="23"/><feColorMatrix type="matrix" values="0 0 0 0 .40  0 0 0 0 .46  0 0 0 0 .22  0 0 3 0 -1.35"/><feGaussianBlur stdDeviation="0.5"/></filter>
<filter id="nzR" x="0" y="0" width="100%" height="100%"><feTurbulence type="fractalNoise" baseFrequency="0.3 0.5" numOctaves="2" seed="5"/><feColorMatrix type="matrix" values="0 0 0 0 0.05  0 0 0 0 0.07  0 0 0 0 0.09  2.4 0 0 0 -0.95"/></filter>
<filter id="nzW" x="0" y="0" width="100%" height="100%"><feTurbulence type="fractalNoise" baseFrequency="0.35 0.6" numOctaves="2" seed="9"/><feColorMatrix type="matrix" values="0 0 0 0 .8  0 0 0 0 .84  0 0 0 0 .88  0 2.4 0 0 -1.25"/></filter>
<linearGradient id="road" x1="0" y1="0" x2="0" y2="1"><stop offset="0" stop-color="#96a0aa"/><stop offset=".3" stop-color="#7c8792"/><stop offset="1" stop-color="#566069"/></linearGradient>
<linearGradient id="sky" x1="0" y1="0" x2="0" y2="1"><stop offset="0" stop-color="#9dabba"/><stop offset=".4" stop-color="#bcc5cd"/><stop offset="1" stop-color="#dfe2e2"/></linearGradient>
<clipPath id="pc"><rect x="0" y="0" width="413" height="275"/></clipPath>
<clipPath id="cL"><path d="M0 0 H118 L127 30 L168 64 L186 94 L196 152 L150 162 L0 186Z"/></clipPath>
<clipPath id="cR"><path d="M216 0 H413 V176 L300 163 L200 152 L203 94 L197 64 L208 30Z"/></clipPath>
<mask id="mRg"><path d="M312 -10 H423 V100 L300 100 Z" fill="#fff" filter="url(#b6)"/></mask><mask id="mRo"><ellipse cx="270" cy="42" rx="50" ry="48" fill="#fff" filter="url(#b6)"/><ellipse cx="232" cy="118" rx="24" ry="26" fill="#fff" filter="url(#b6)"/><ellipse cx="340" cy="28" rx="30" ry="24" fill="#fff" filter="url(#b6)"/></mask>
<clipPath id="cRoad"><path d="M0 190 L196 152 L204 152 L413 176 V275 H0Z"/></clipPath>
</defs><g clip-path="url(#pc)"><rect width="413" height="275" fill="#3a2a26"/><rect x="0" y="150" width="413" height="125" fill="url(#road)"/><g filter="url(#b6)"><path d="M-10 196 L150 178 L120 285 L-10 285Z" fill="#272d34" opacity=".55"/><path d="M423 190 L290 196 L315 285 L423 285Z" fill="#2b3137" opacity=".65"/><path d="M140 160 L199 150 L270 160 L310 196 L230 240 L160 240 L100 200Z" fill="#8994a0" opacity=".5"/></g><g filter="url(#b6)"><path d="M105 -10 L220 -10 L206 60 L204 152 L195 152 L185 95 L162 62 L122 30Z" fill="url(#sky)"/><ellipse cx="178" cy="34" rx="22" ry="14" fill="#dde1e4"/><ellipse cx="150" cy="10" rx="24" ry="8" fill="#9fadbc"/><ellipse cx="190" cy="6" rx="18" ry="7" fill="#d4dadf"/><path d="M-10 -10 L116 -10 L124 30 L162 62 L187 96 L196 152 L150 160 L-10 185Z" fill="#a33422"/><ellipse cx="60" cy="30" rx="62" ry="30" fill="#c2452b"/><ellipse cx="150" cy="84" rx="30" ry="20" fill="#c0432a"/><ellipse cx="172" cy="112" rx="18" ry="16" fill="#b83c26"/><ellipse cx="20" cy="72" rx="28" ry="16" fill="#7a2a20"/><path d="M22 98 L140 104 L180 136 L192 156 L60 174 L22 176Z" fill="#2c1c1e" opacity=".88"/><path d="M-10 92 L24 94 L24 186 L-10 190Z" fill="#9a878b"/><path d="M-5 176 L150 158 L196 152 L150 165 L-5 196Z" fill="#a8603c"/><path d="M214 -10 L423 -10 L423 180 L203 152 L205 60Z" fill="#2d3926"/><path d="M212 -10 L296 -10 L304 56 L276 108 L232 134 L203 150 L205 60Z" fill="#7a3220"/><ellipse cx="255" cy="40" rx="28" ry="22" fill="#96402a"/><ellipse cx="338" cy="28" rx="30" ry="22" fill="#b36a2d"/><ellipse cx="296" cy="50" rx="20" ry="12" fill="#a85528"/><ellipse cx="398" cy="40" rx="26" ry="40" fill="#1f2a1c"/><ellipse cx="345" cy="78" rx="44" ry="14" fill="#3c4c2c"/><path d="M236 100 L423 95 L423 182 L300 166 L205 153Z" fill="#1c2622" opacity=".93"/><ellipse cx="404" cy="140" rx="14" ry="14" fill="#b4662c"/><ellipse cx="228" cy="118" rx="16" ry="16" fill="#98381f"/></g><g clip-path="url(#cL)"><rect width="413" height="190" filter="url(#nzD)"/><rect width="413" height="190" filter="url(#nzL)" opacity=".75"/></g><g clip-path="url(#cR)"><rect width="413" height="190" filter="url(#nzD)"/><g mask="url(#mRo)"><rect width="413" height="190" filter="url(#nzL)" opacity=".65"/></g></g><g mask="url(#mRg)"><rect width="413" height="110" filter="url(#nzG)" opacity=".8"/></g><path d="M262 100 L423 96 L423 178 L300 164 L250 157Z" fill="#141d19" opacity=".6" filter="url(#b6)"/><path d="M30 118 L150 122 L188 150 L60 170 L30 172Z" fill="#1e1416" opacity=".35" filter="url(#b6)"/><path d="M122 -12 L212 -12 L206 30 L199 64 L201 96 L199 150 L197 150 L189 98 L171 66 L132 32Z" fill="url(#sky)" filter="url(#rough)"/><ellipse cx="182" cy="40" rx="17" ry="14" fill="#dfe2e3" filter="url(#b6)" opacity=".9"/><ellipse cx="164" cy="5" rx="24" ry="7" fill="#94a3b3" filter="url(#b6)"/><ellipse cx="197" cy="10" rx="10" ry="7" fill="#cfd6dc" filter="url(#b6)" opacity=".8"/><g filter="url(#b1)" opacity=".8"><path d="M28.8 75 L30.0 169 L33.0 169 L31.8 75Z" fill="#1b1214"/><path d="M31.5 95 l-14 -22" stroke="#1b1214" stroke-width="1.2"/><path d="M43.1 77 L44.0 168 L46.2 168 L45.3 77Z" fill="#1b1214"/><path d="M45.1 97 l-12 -22" stroke="#1b1214" stroke-width="1.2"/><path d="M56.8 80 L58.0 166 L61.0 166 L59.8 80Z" fill="#1b1214"/><path d="M59.5 100 l-14 -22" stroke="#1b1214" stroke-width="1.2"/><path d="M70.2 82 L71.0 165 L73.0 165 L72.2 82Z" fill="#1b1214"/><path d="M72.0 102 l-12 -22" stroke="#1b1214" stroke-width="1.2"/><path d="M83.0 84 L84.0 164 L86.6 164 L85.6 84Z" fill="#1b1214"/><path d="M85.3 104 l-13 -22" stroke="#1b1214" stroke-width="1.2"/><path d="M97.2 86 L98.0 162 L100.0 162 L99.2 86Z" fill="#1b1214"/><path d="M99.0 106 l-12 -22" stroke="#1b1214" stroke-width="1.2"/><path d="M110.0 89 L111.0 161 L113.5 161 L112.5 89Z" fill="#1b1214"/><path d="M112.2 109 l-13 -22" stroke="#1b1214" stroke-width="1.2"/><path d="M123.2 91 L124.0 160 L126.0 160 L125.2 91Z" fill="#1b1214"/><path d="M125.0 111 l-12 -22" stroke="#1b1214" stroke-width="1.2"/><path d="M136.1 93 L137.0 158 L139.2 158 L138.3 93Z" fill="#1b1214"/><path d="M138.1 113 l-12 -22" stroke="#1b1214" stroke-width="1.2"/><path d="M148.3 95 L149.0 157 L150.8 157 L150.1 95Z" fill="#1b1214"/><path d="M149.9 115 l-12 -22" stroke="#1b1214" stroke-width="1.2"/><path d="M159.3 97 L160.0 156 L161.8 156 L161.1 97Z" fill="#1b1214"/><path d="M160.9 117 l-12 -22" stroke="#1b1214" stroke-width="1.2"/><path d="M169.4 98 L170.0 155 L171.5 155 L170.9 98Z" fill="#1b1214"/><path d="M170.8 118 l-11 -22" stroke="#1b1214" stroke-width="1.2"/><path d="M178.5 100 L179.0 154 L180.3 154 L179.8 100Z" fill="#1b1214"/><path d="M179.7 120 l-11 -22" stroke="#1b1214" stroke-width="1.2"/><rect x="226" y="100" width="1.5" height="54" fill="#10150f"/><rect x="240" y="99" width="2" height="56" fill="#10150f"/><rect x="256" y="98" width="2" height="58" fill="#10150f"/><rect x="276" y="98" width="2.5" height="60" fill="#10150f"/><rect x="300" y="96" width="2.5" height="63" fill="#10150f"/><rect x="326" y="95" width="3" height="66" fill="#10150f"/><rect x="356" y="94" width="3" height="70" fill="#10150f"/><rect x="386" y="92" width="3.5" height="73" fill="#10150f"/></g><g filter="url(#b1)" fill="#c9d2da" opacity=".75"><circle cx="6" cy="8" r="3"/><circle cx="16" cy="4" r="2"/><circle cx="24" cy="12" r="1.6"/><circle cx="3" cy="52" r="2.2"/><circle cx="10" cy="74" r="2.5"/><circle cx="407" cy="40" r="3"/><circle cx="5" cy="120" r="3"/><circle cx="14" cy="140" r="2.4"/></g><g filter="url(#b1)"><path d="M196 153 L-5 191 L-5 196 L196 155Z" fill="#cfc8c2" opacity=".8"/><path d="M204 153 L420 174 L420 178 L204 155Z" fill="#8b8f8c" opacity=".55"/><path d="M197.6 152 L199 152 L217.6 275 L187.8 275Z" fill="#e4c77c"/><path d="M199.6 152 L201 152 L265 275 L238 275Z" fill="#e6a64c"/><path d="M199 152 L199.6 152 L238 275 L217.6 275Z" fill="#4d5154" opacity=".6"/></g><g clip-path="url(#cRoad)"><rect x="0" y="150" width="413" height="125" filter="url(#nzR)" opacity=".5"/><rect x="0" y="150" width="413" height="125" filter="url(#nzW)" opacity=".22"/></g><g filter="url(#b1)" opacity=".85"><ellipse cx="58.8" cy="198.3" rx="2.6" ry="1.2" fill="#a88a78" transform="rotate(22 58.8 198.3)"/><ellipse cx="149.7" cy="222.0" rx="2.2" ry="1.0" fill="#3a3436" transform="rotate(-17 149.7 222.0)"/><ellipse cx="178.4" cy="166.2" rx="1.3" ry="0.6" fill="#a88a78" transform="rotate(5 178.4 166.2)"/><ellipse cx="344.8" cy="209.5" rx="2.1" ry="1.0" fill="#b09680" transform="rotate(10 344.8 209.5)"/><ellipse cx="395.9" cy="232.3" rx="3.6" ry="1.7" fill="#b87c52" transform="rotate(-27 395.9 232.3)"/><ellipse cx="14.7" cy="271.3" rx="5.8" ry="2.7" fill="#8a4a34" transform="rotate(-4 14.7 271.3)"/><ellipse cx="44.8" cy="178.2" rx="1.7" ry="0.8" fill="#7d5a48" transform="rotate(-24 44.8 178.2)"/><ellipse cx="265.3" cy="227.1" rx="3.0" ry="1.4" fill="#3a3436" transform="rotate(15 265.3 227.1)"/><ellipse cx="20.2" cy="169.0" rx="1.4" ry="0.7" fill="#3a3436" transform="rotate(-3 20.2 169.0)"/><ellipse cx="191.9" cy="249.0" rx="5.1" ry="2.4" fill="#5d4a44" transform="rotate(-11 191.9 249.0)"/><ellipse cx="71.0" cy="189.8" rx="2.5" ry="1.2" fill="#a88a78" transform="rotate(6 71.0 189.8)"/><ellipse cx="184.9" cy="200.5" rx="2.7" ry="1.2" fill="#a88a78" transform="rotate(-23 184.9 200.5)"/><ellipse cx="64.8" cy="219.3" rx="2.7" ry="1.3" fill="#2c2a2c" transform="rotate(-4 64.8 219.3)"/><ellipse cx="277.7" cy="166.4" rx="1.6" ry="0.8" fill="#c4ae9a" transform="rotate(20 277.7 166.4)"/><ellipse cx="127.7" cy="260.1" rx="4.8" ry="2.3" fill="#c4ae9a" transform="rotate(1 127.7 260.1)"/><ellipse cx="188.0" cy="226.9" rx="4.0" ry="1.9" fill="#8a4a34" transform="rotate(0 188.0 226.9)"/><ellipse cx="22.5" cy="240.1" rx="4.2" ry="2.0" fill="#8a4a34" transform="rotate(11 22.5 240.1)"/><ellipse cx="283.2" cy="226.7" rx="3.1" ry="1.5" fill="#b87c52" transform="rotate(26 283.2 226.7)"/><ellipse cx="4.5" cy="236.9" rx="3.5" ry="1.6" fill="#7d5a48" transform="rotate(9 4.5 236.9)"/><ellipse cx="19.9" cy="175.1" rx="2.0" ry="0.9" fill="#7d5a48" transform="rotate(17 19.9 175.1)"/><ellipse cx="160.4" cy="189.7" rx="2.6" ry="1.2" fill="#a88a78" transform="rotate(-20 160.4 189.7)"/><ellipse cx="341.6" cy="260.9" rx="5.4" ry="2.5" fill="#8a4a34" transform="rotate(15 341.6 260.9)"/><ellipse cx="146.8" cy="208.5" rx="3.4" ry="1.6" fill="#b09680" transform="rotate(-21 146.8 208.5)"/><ellipse cx="59.0" cy="171.3" rx="1.8" ry="0.8" fill="#9a7a66" transform="rotate(1 59.0 171.3)"/><ellipse cx="72.1" cy="255.1" rx="3.4" ry="1.6" fill="#7d5a48" transform="rotate(-4 72.1 255.1)"/><ellipse cx="253.0" cy="221.9" rx="2.7" ry="1.3" fill="#7d5a48" transform="rotate(14 253.0 221.9)"/><ellipse cx="396.9" cy="258.2" rx="4.7" ry="2.2" fill="#9a7a66" transform="rotate(-1 396.9 258.2)"/><ellipse cx="324.9" cy="262.7" rx="5.5" ry="2.6" fill="#3a3436" transform="rotate(-5 324.9 262.7)"/><ellipse cx="161.7" cy="206.6" rx="2.6" ry="1.2" fill="#b87c52" transform="rotate(-27 161.7 206.6)"/><ellipse cx="411.5" cy="183.3" rx="2.0" ry="0.9" fill="#a88a78" transform="rotate(-9 411.5 183.3)"/><ellipse cx="38.3" cy="229.3" rx="3.5" ry="1.6" fill="#3a3436" transform="rotate(-24 38.3 229.3)"/><ellipse cx="254.6" cy="268.3" rx="3.0" ry="1.4" fill="#b09680" transform="rotate(9 254.6 268.3)"/><ellipse cx="263.4" cy="204.1" rx="3.3" ry="1.5" fill="#c4ae9a" transform="rotate(-7 263.4 204.1)"/><ellipse cx="43.8" cy="215.1" rx="2.9" ry="1.4" fill="#2c2a2c" transform="rotate(0 43.8 215.1)"/><ellipse cx="31.3" cy="216.2" rx="2.2" ry="1.0" fill="#5d4a44" transform="rotate(17 31.3 216.2)"/><ellipse cx="345.6" cy="191.7" rx="1.8" ry="0.9" fill="#9a7a66" transform="rotate(-17 345.6 191.7)"/><ellipse cx="224.8" cy="178.4" rx="1.5" ry="0.7" fill="#3a3436" transform="rotate(-11 224.8 178.4)"/><ellipse cx="360.2" cy="271.6" rx="5.2" ry="2.4" fill="#8a4a34" transform="rotate(3 360.2 271.6)"/><ellipse cx="65.7" cy="203.1" rx="3.0" ry="1.4" fill="#3a3436" transform="rotate(4 65.7 203.1)"/><ellipse cx="134.4" cy="249.3" rx="3.1" ry="1.5" fill="#b09680" transform="rotate(21 134.4 249.3)"/><ellipse cx="164.5" cy="188.8" rx="2.5" ry="1.2" fill="#b09680" transform="rotate(3 164.5 188.8)"/><ellipse cx="304.2" cy="217.2" rx="3.9" ry="1.8" fill="#8a4a34" transform="rotate(0 304.2 217.2)"/><ellipse cx="287.9" cy="191.0" rx="2.8" ry="1.3" fill="#2c2a2c" transform="rotate(21 287.9 191.0)"/><ellipse cx="412.9" cy="266.9" rx="6.0" ry="2.8" fill="#5d4a44" transform="rotate(-25 412.9 266.9)"/><ellipse cx="91.0" cy="186.7" rx="1.8" ry="0.8" fill="#b09680" transform="rotate(0 91.0 186.7)"/><ellipse cx="375.8" cy="231.9" rx="4.2" ry="2.0" fill="#2c2a2c" transform="rotate(28 375.8 231.9)"/><ellipse cx="333.2" cy="235.1" rx="2.5" ry="1.2" fill="#a88a78" transform="rotate(28 333.2 235.1)"/><ellipse cx="296.0" cy="205.5" rx="2.2" ry="1.0" fill="#7d5a48" transform="rotate(-3 296.0 205.5)"/><ellipse cx="135.7" cy="250.4" rx="4.8" ry="2.2" fill="#b87c52" transform="rotate(-1 135.7 250.4)"/><ellipse cx="395.5" cy="207.0" rx="3.1" ry="1.4" fill="#7d5a48" transform="rotate(-22 395.5 207.0)"/><ellipse cx="244.9" cy="165.1" rx="1.5" ry="0.7" fill="#7d5a48" transform="rotate(9 244.9 165.1)"/><ellipse cx="409.7" cy="254.6" rx="4.5" ry="2.1" fill="#5d4a44" transform="rotate(-21 409.7 254.6)"/><ellipse cx="50.4" cy="223.4" rx="2.1" ry="1.0" fill="#a88a78" transform="rotate(3 50.4 223.4)"/><ellipse cx="53.9" cy="245.9" rx="5.2" ry="2.4" fill="#b09680" transform="rotate(22 53.9 245.9)"/><ellipse cx="6.8" cy="259.9" rx="3.3" ry="1.5" fill="#3a3436" transform="rotate(-15 6.8 259.9)"/><ellipse cx="132.9" cy="247.5" rx="4.0" ry="1.9" fill="#7d5a48" transform="rotate(-27 132.9 247.5)"/><ellipse cx="144.7" cy="263.9" rx="4.2" ry="2.0" fill="#c4ae9a" transform="rotate(22 144.7 263.9)"/><ellipse cx="172.9" cy="263.3" rx="5.7" ry="2.6" fill="#3a3436" transform="rotate(-22 172.9 263.3)"/><ellipse cx="181.2" cy="164.1" rx="1.3" ry="0.6" fill="#9a7a66" transform="rotate(19 181.2 164.1)"/><ellipse cx="67.9" cy="251.5" rx="3.9" ry="1.8" fill="#a88a78" transform="rotate(5 67.9 251.5)"/><ellipse cx="283.6" cy="168.9" rx="1.6" ry="0.8" fill="#2c2a2c" transform="rotate(20 283.6 168.9)"/><ellipse cx="368.6" cy="249.0" rx="2.6" ry="1.2" fill="#b09680" transform="rotate(-13 368.6 249.0)"/><ellipse cx="36.3" cy="166.7" rx="1.5" ry="0.7" fill="#9a7a66" transform="rotate(18 36.3 166.7)"/><ellipse cx="21.8" cy="262.1" rx="3.7" ry="1.7" fill="#3a3436" transform="rotate(8 21.8 262.1)"/><ellipse cx="288.0" cy="219.4" rx="3.0" ry="1.4" fill="#3a3436" transform="rotate(21 288.0 219.4)"/><ellipse cx="393.3" cy="215.5" rx="3.3" ry="1.5" fill="#8a4a34" transform="rotate(29 393.3 215.5)"/><ellipse cx="394.0" cy="224.7" rx="3.9" ry="1.8" fill="#7d5a48" transform="rotate(-4 394.0 224.7)"/><ellipse cx="182.0" cy="175.6" rx="1.5" ry="0.7" fill="#b09680" transform="rotate(-3 182.0 175.6)"/><ellipse cx="278.2" cy="170.2" rx="1.8" ry="0.8" fill="#7d5a48" transform="rotate(30 278.2 170.2)"/><ellipse cx="274.3" cy="242.2" rx="2.8" ry="1.3" fill="#7d5a48" transform="rotate(-1 274.3 242.2)"/><ellipse cx="397.9" cy="186.6" rx="2.0" ry="0.9" fill="#2c2a2c" transform="rotate(-20 397.9 186.6)"/><ellipse cx="347.1" cy="272.9" rx="3.4" ry="1.6" fill="#b87c52" transform="rotate(2 347.1 272.9)"/><ellipse cx="173.2" cy="207.2" rx="2.5" ry="1.1" fill="#a88a78" transform="rotate(16 173.2 207.2)"/><ellipse cx="138.0" cy="203.0" rx="2.5" ry="1.2" fill="#9a7a66" transform="rotate(-6 138.0 203.0)"/><ellipse cx="258.9" cy="199.1" rx="2.5" ry="1.2" fill="#a88a78" transform="rotate(-23 258.9 199.1)"/><ellipse cx="328.5" cy="272.3" rx="6.2" ry="2.9" fill="#a88a78" transform="rotate(-25 328.5 272.3)"/><ellipse cx="11.7" cy="191.7" rx="2.6" ry="1.2" fill="#8a4a34" transform="rotate(18 11.7 191.7)"/><ellipse cx="173.6" cy="176.5" rx="2.1" ry="1.0" fill="#8a4a34" transform="rotate(-5 173.6 176.5)"/><ellipse cx="383.8" cy="178.7" rx="1.9" ry="0.9" fill="#5d4a44" transform="rotate(-25 383.8 178.7)"/><ellipse cx="333.2" cy="193.3" rx="1.9" ry="0.9" fill="#a88a78" transform="rotate(-13 333.2 193.3)"/><ellipse cx="263.4" cy="267.1" rx="5.4" ry="2.5" fill="#a88a78" transform="rotate(8 263.4 267.1)"/><ellipse cx="23.2" cy="257.9" rx="5.3" ry="2.5" fill="#2c2a2c" transform="rotate(-30 23.2 257.9)"/><ellipse cx="228.9" cy="200.0" rx="3.1" ry="1.4" fill="#8a4a34" transform="rotate(9 228.9 200.0)"/><ellipse cx="217.9" cy="176.5" rx="1.6" ry="0.8" fill="#a88a78" transform="rotate(-20 217.9 176.5)"/><ellipse cx="71.6" cy="191.3" rx="2.8" ry="1.3" fill="#8a4a34" transform="rotate(3 71.6 191.3)"/><ellipse cx="117.7" cy="247.1" rx="3.8" ry="1.8" fill="#7d5a48" transform="rotate(-13 117.7 247.1)"/><ellipse cx="2.7" cy="200.9" rx="2.1" ry="1.0" fill="#9a7a66" transform="rotate(-29 2.7 200.9)"/><ellipse cx="40.0" cy="266.7" rx="5.5" ry="2.6" fill="#b87c52" transform="rotate(12 40.0 266.7)"/><ellipse cx="348.0" cy="217.4" rx="2.8" ry="1.3" fill="#3a3436" transform="rotate(-11 348.0 217.4)"/><ellipse cx="410.6" cy="239.0" rx="3.2" ry="1.5" fill="#7d5a48" transform="rotate(-5 410.6 239.0)"/><ellipse cx="410.3" cy="272.8" rx="5.8" ry="2.7" fill="#9a7a66" transform="rotate(-26 410.3 272.8)"/><ellipse cx="367.2" cy="232.1" rx="3.2" ry="1.5" fill="#9a7a66" transform="rotate(-25 367.2 232.1)"/><ellipse cx="156.1" cy="236.5" rx="3.6" ry="1.7" fill="#8a4a34" transform="rotate(8 156.1 236.5)"/><ellipse cx="119.0" cy="189.1" rx="2.1" ry="1.0" fill="#7d5a48" transform="rotate(-13 119.0 189.1)"/><ellipse cx="106.4" cy="211.9" rx="3.7" ry="1.7" fill="#3a3436" transform="rotate(-10 106.4 211.9)"/><ellipse cx="403.5" cy="189.4" rx="2.0" ry="0.9" fill="#5d4a44" transform="rotate(-19 403.5 189.4)"/><ellipse cx="156.4" cy="162.1" rx="1.4" ry="0.6" fill="#3a3436" transform="rotate(11 156.4 162.1)"/><ellipse cx="106.7" cy="162.6" rx="1.3" ry="0.6" fill="#b87c52" transform="rotate(7 106.7 162.6)"/><ellipse cx="4.5" cy="166.7" rx="1.4" ry="0.7" fill="#b09680" transform="rotate(-25 4.5 166.7)"/><ellipse cx="273.1" cy="246.1" rx="4.4" ry="2.1" fill="#c4ae9a" transform="rotate(-6 273.1 246.1)"/><ellipse cx="299.8" cy="247.6" rx="3.8" ry="1.8" fill="#8a4a34" transform="rotate(16 299.8 247.6)"/><ellipse cx="56.2" cy="231.3" rx="4.2" ry="1.9" fill="#3a3436" transform="rotate(10 56.2 231.3)"/><ellipse cx="291.5" cy="210.1" rx="2.8" ry="1.3" fill="#3a3436" transform="rotate(18 291.5 210.1)"/><ellipse cx="348.2" cy="218.5" rx="3.6" ry="1.7" fill="#c4ae9a" transform="rotate(21 348.2 218.5)"/><ellipse cx="283.9" cy="262.0" rx="4.9" ry="2.3" fill="#b09680" transform="rotate(-25 283.9 262.0)"/><ellipse cx="51.3" cy="165.5" rx="1.4" ry="0.7" fill="#a88a78" transform="rotate(-6 51.3 165.5)"/><ellipse cx="259.9" cy="232.3" rx="3.8" ry="1.8" fill="#2c2a2c" transform="rotate(-14 259.9 232.3)"/><ellipse cx="332.4" cy="162.4" rx="1.5" ry="0.7" fill="#3a3436" transform="rotate(27 332.4 162.4)"/><ellipse cx="273.9" cy="221.9" rx="2.2" ry="1.0" fill="#2c2a2c" transform="rotate(-14 273.9 221.9)"/><ellipse cx="352.9" cy="252.6" rx="3.2" ry="1.5" fill="#b09680" transform="rotate(-16 352.9 252.6)"/><ellipse cx="407.7" cy="244.9" rx="3.8" ry="1.8" fill="#b87c52" transform="rotate(-26 407.7 244.9)"/><ellipse cx="284.2" cy="215.6" rx="3.4" ry="1.6" fill="#c4ae9a" transform="rotate(10 284.2 215.6)"/><ellipse cx="27.8" cy="234.0" rx="2.6" ry="1.2" fill="#8a4a34" transform="rotate(11 27.8 234.0)"/><ellipse cx="123.8" cy="245.2" rx="4.0" ry="1.9" fill="#9a7a66" transform="rotate(0 123.8 245.2)"/><ellipse cx="108.7" cy="168.8" rx="1.7" ry="0.8" fill="#b09680" transform="rotate(13 108.7 168.8)"/><ellipse cx="294.9" cy="216.8" rx="2.6" ry="1.2" fill="#2c2a2c" transform="rotate(-1 294.9 216.8)"/><ellipse cx="415.2" cy="247.9" rx="4.0" ry="1.9" fill="#8a4a34" transform="rotate(-25 415.2 247.9)"/><ellipse cx="2.4" cy="266.9" rx="4.3" ry="2.0" fill="#3a3436" transform="rotate(-2 2.4 266.9)"/><ellipse cx="158.6" cy="273.3" rx="6.1" ry="2.8" fill="#b09680" transform="rotate(-26 158.6 273.3)"/><ellipse cx="55.0" cy="227.1" rx="3.3" ry="1.6" fill="#5d4a44" transform="rotate(-22 55.0 227.1)"/><ellipse cx="262.2" cy="229.6" rx="2.8" ry="1.3" fill="#a88a78" transform="rotate(15 262.2 229.6)"/><ellipse cx="161.7" cy="260.1" rx="3.1" ry="1.5" fill="#2c2a2c" transform="rotate(13 161.7 260.1)"/><ellipse cx="122.7" cy="212.5" rx="2.2" ry="1.0" fill="#5d4a44" transform="rotate(-6 122.7 212.5)"/><ellipse cx="350.4" cy="197.4" rx="1.7" ry="0.8" fill="#5d4a44" transform="rotate(23 350.4 197.4)"/><ellipse cx="392.6" cy="206.6" rx="2.2" ry="1.0" fill="#9a7a66" transform="rotate(27 392.6 206.6)"/><ellipse cx="102.1" cy="244.9" rx="2.6" ry="1.2" fill="#b87c52" transform="rotate(25 102.1 244.9)"/><ellipse cx="147.6" cy="228.0" rx="3.1" ry="1.5" fill="#8a4a34" transform="rotate(24 147.6 228.0)"/><ellipse cx="38.0" cy="167.4" rx="1.7" ry="0.8" fill="#8a4a34" transform="rotate(10 38.0 167.4)"/><ellipse cx="100.5" cy="266.8" rx="3.6" ry="1.7" fill="#3a3436" transform="rotate(-10 100.5 266.8)"/><ellipse cx="152.9" cy="183.3" rx="2.4" ry="1.1" fill="#9a7a66" transform="rotate(21 152.9 183.3)"/><ellipse cx="164.2" cy="247.3" rx="4.9" ry="2.3" fill="#3a3436" transform="rotate(5 164.2 247.3)"/><ellipse cx="29.1" cy="184.8" rx="2.5" ry="1.2" fill="#b87c52" transform="rotate(-2 29.1 184.8)"/><ellipse cx="53.6" cy="230.9" rx="4.2" ry="2.0" fill="#2c2a2c" transform="rotate(-27 53.6 230.9)"/><ellipse cx="170.5" cy="181.1" rx="1.8" ry="0.8" fill="#8a4a34" transform="rotate(17 170.5 181.1)"/><ellipse cx="271.1" cy="244.7" rx="3.5" ry="1.6" fill="#b09680" transform="rotate(-11 271.1 244.7)"/><ellipse cx="277.9" cy="216.1" rx="2.2" ry="1.0" fill="#7d5a48" transform="rotate(-26 277.9 216.1)"/><ellipse cx="378.2" cy="185.3" rx="2.1" ry="1.0" fill="#b09680" transform="rotate(-2 378.2 185.3)"/><ellipse cx="416.5" cy="263.5" rx="4.2" ry="1.9" fill="#7d5a48" transform="rotate(5 416.5 263.5)"/><ellipse cx="33.4" cy="183.5" rx="1.9" ry="0.9" fill="#a88a78" transform="rotate(-10 33.4 183.5)"/><ellipse cx="104.3" cy="188.8" rx="2.2" ry="1.0" fill="#9a7a66" transform="rotate(17 104.3 188.8)"/><ellipse cx="156.9" cy="259.5" rx="5.0" ry="2.3" fill="#b09680" transform="rotate(-6 156.9 259.5)"/><ellipse cx="313.1" cy="192.3" rx="2.3" ry="1.1" fill="#c4ae9a" transform="rotate(-7 313.1 192.3)"/><ellipse cx="360.0" cy="232.5" rx="2.8" ry="1.3" fill="#8a4a34" transform="rotate(27 360.0 232.5)"/><ellipse cx="164.1" cy="189.8" rx="2.1" ry="1.0" fill="#8a4a34" transform="rotate(24 164.1 189.8)"/><ellipse cx="404.5" cy="253.2" rx="2.9" ry="1.4" fill="#b87c52" transform="rotate(15 404.5 253.2)"/><ellipse cx="335.2" cy="247.5" rx="5.2" ry="2.4" fill="#2c2a2c" transform="rotate(-30 335.2 247.5)"/><ellipse cx="388.5" cy="170.2" rx="1.9" ry="0.9" fill="#3a3436" transform="rotate(24 388.5 170.2)"/><ellipse cx="184.9" cy="214.4" rx="3.4" ry="1.6" fill="#b09680" transform="rotate(-21 184.9 214.4)"/><ellipse cx="406.1" cy="179.0" rx="1.6" ry="0.7" fill="#2c2a2c" transform="rotate(-25 406.1 179.0)"/><ellipse cx="11.7" cy="223.8" rx="3.8" ry="1.8" fill="#b09680" transform="rotate(6 11.7 223.8)"/><ellipse cx="268.0" cy="265.0" rx="3.7" ry="1.7" fill="#7d5a48" transform="rotate(10 268.0 265.0)"/><ellipse cx="264.2" cy="190.2" rx="2.4" ry="1.1" fill="#a88a78" transform="rotate(-24 264.2 190.2)"/><ellipse cx="216.8" cy="169.9" rx="1.7" ry="0.8" fill="#b87c52" transform="rotate(-14 216.8 169.9)"/><ellipse cx="249.2" cy="187.0" rx="1.6" ry="0.7" fill="#8a4a34" transform="rotate(-1 249.2 187.0)"/><ellipse cx="128.8" cy="193.2" rx="2.7" ry="1.3" fill="#b09680" transform="rotate(0 128.8 193.2)"/><ellipse cx="169.2" cy="165.3" rx="1.6" ry="0.7" fill="#9a7a66" transform="rotate(-29 169.2 165.3)"/><ellipse cx="369.3" cy="183.7" rx="2.2" ry="1.0" fill="#a88a78" transform="rotate(-14 369.3 183.7)"/></g><ellipse cx="243" cy="228" rx="6" ry="3.5" fill="#b4402c" filter="url(#b1)"/><ellipse cx="258" cy="226" rx="4" ry="2.5" fill="#a03828" filter="url(#b1)"/><ellipse cx="403" cy="270" rx="10" ry="4" fill="#7e9a44" filter="url(#b1)"/></g></svg>
<div class="a" style="left:211px;top:508px;width:161px;height:291px;background:#d9d9d9;"></div>
<div class="a" style="left:541px;top:508px;width:146px;height:30px;background:#ffff00;"></div>
<div class="a" style="left:687px;top:508px;width:120px;height:30px;background:#00b0f0;"></div>
<div class="a" style="left:807px;top:508px;width:137px;height:30px;background:#00b050;"></div>
<svg style="left:0px;top:0px" width="1568" height="951" viewBox="0 0 1568 951"><path d="M371 508.5 H541 M943 508.5 H1139.5" stroke="#d4d4d4"/><path d="M371 537.5 H1139.5" stroke="#d4d4d4"/><path d="M371 566.5 H1139.5" stroke="#d4d4d4"/><path d="M371 595.5 H1139.5" stroke="#d4d4d4"/><path d="M371 624.5 H1139.5" stroke="#d4d4d4"/><path d="M371 653.5 H1139.5" stroke="#d4d4d4"/><path d="M371 682.5 H1139.5" stroke="#d4d4d4"/><path d="M371 711.5 H1139.5" stroke="#d4d4d4"/><path d="M371 740.5 H1139.5" stroke="#d4d4d4"/><path d="M371 769.5 H1139.5" stroke="#d4d4d4"/><path d="M371 798.5 H1139.5" stroke="#d4d4d4"/><path d="M211 827.5 H1139.5" stroke="#d4d4d4"/><path d="M211 856.5 H1139.5" stroke="#d4d4d4"/><path d="M211 885.5 H1139.5" stroke="#d4d4d4"/><path d="M211 914.5 H1139.5" stroke="#d4d4d4"/><path d="M211 943.5 H1139.5" stroke="#d4d4d4"/><path d="M211.5 800 V951" stroke="#d4d4d4"/><path d="M371.5 509 V951" stroke="#d4d4d4"/><path d="M541.5 538 V951" stroke="#d4d4d4"/><path d="M687.5 538 V951" stroke="#d4d4d4"/><path d="M807.5 538 V951" stroke="#d4d4d4"/><path d="M943.5 509 V951" stroke="#d4d4d4"/><path d="M1041.5 509 V951" stroke="#d4d4d4"/><path d="M1139.5 509 V951" stroke="#d4d4d4"/><path d="M1445 508.5 H1536" stroke="#d8d8d8"/><path d="M1445 537.5 H1536" stroke="#d8d8d8"/><path d="M1445 566.5 H1536" stroke="#d8d8d8"/><path d="M1445 595.5 H1536" stroke="#d8d8d8"/><path d="M1445 624.5 H1536" stroke="#d8d8d8"/><path d="M1445 653.5 H1536" stroke="#d8d8d8"/><path d="M1445 682.5 H1536" stroke="#d8d8d8"/><path d="M1445 711.5 H1536" stroke="#d8d8d8"/><path d="M1445 740.5 H1536" stroke="#d8d8d8"/><path d="M1445 769.5 H1536" stroke="#d8d8d8"/><path d="M1445 798.5 H1536" stroke="#d8d8d8"/><path d="M1445 827.5 H1536" stroke="#d8d8d8"/><path d="M1445 856.5 H1536" stroke="#d8d8d8"/><path d="M1445 885.5 H1536" stroke="#d8d8d8"/><path d="M1445 914.5 H1536" stroke="#d8d8d8"/><path d="M1445 943.5 H1536" stroke="#d8d8d8"/><path d="M1445.5 509 V951" stroke="#d8d8d8"/></svg>
<div class="a" style="left:211px;top:536.6px;width:161px;height:1.7px;background:#0a0a0a;"></div>
<div class="a" style="left:211px;top:565.6px;width:161px;height:1.7px;background:#0a0a0a;"></div>
<div class="a" style="left:211px;top:594.6px;width:161px;height:1.7px;background:#0a0a0a;"></div>
<div class="a" style="left:211px;top:623.6px;width:161px;height:1.7px;background:#0a0a0a;"></div>
<div class="a" style="left:211px;top:652.6px;width:161px;height:1.7px;background:#0a0a0a;"></div>
<div class="a" style="left:211px;top:681.6px;width:161px;height:1.7px;background:#0a0a0a;"></div>
<div class="a" style="left:211px;top:710.6px;width:161px;height:1.7px;background:#0a0a0a;"></div>
<div class="a" style="left:211px;top:739.6px;width:161px;height:1.7px;background:#0a0a0a;"></div>
<div class="a" style="left:211px;top:768.6px;width:161px;height:1.7px;background:#0a0a0a;"></div>
<div class="a" style="left:211px;top:797.6px;width:161px;height:1.7px;background:#0a0a0a;"></div>
<div class="t" style="left:275.50px;top:515.77px;font-size:18.5px;letter-spacing:0.387px;color:#000;font-weight:bold;">S/N</div>
<div class="t" style="left:286.05px;top:544.24px;font-size:19.6px;color:#000;font-weight:bold;">1</div>
<div class="t" style="left:286.05px;top:573.24px;font-size:19.6px;color:#000;font-weight:bold;">2</div>
<div class="t" style="left:286.05px;top:602.24px;font-size:19.6px;color:#000;font-weight:bold;">3</div>
<div class="t" style="left:286.05px;top:631.24px;font-size:19.6px;color:#000;font-weight:bold;">4</div>
<div class="t" style="left:286.05px;top:660.24px;font-size:19.6px;color:#000;font-weight:bold;">5</div>
<div class="t" style="left:286.05px;top:689.24px;font-size:19.6px;color:#000;font-weight:bold;">6</div>
<div class="t" style="left:286.05px;top:718.24px;font-size:19.6px;color:#000;font-weight:bold;">7</div>
<div class="t" style="left:286.05px;top:747.24px;font-size:19.6px;color:#000;font-weight:bold;">8</div>
<div class="t" style="left:286.05px;top:776.24px;font-size:19.6px;color:#000;font-weight:bold;">9</div>
<div class="t" style="left:425.90px;top:516.37px;font-size:14.4px;letter-spacing:0.369px;color:#000;font-weight:bold;">Gadgets</div>
<div class="t" style="left:434.50px;top:547.97px;font-size:14px;letter-spacing:0.030px;color:#000;">Laptop</div>
<div class="t" style="left:430.25px;top:576.97px;font-size:14px;letter-spacing:-0.092px;color:#000;">Speaker</div>
<div class="t" style="left:434.25px;top:605.97px;font-size:14px;letter-spacing:0.296px;color:#000;">Mouse</div>
<div class="t" style="left:417.50px;top:634.97px;font-size:14px;letter-spacing:0.385px;color:#000;">Microphone</div>
<div class="t" style="left:424.25px;top:663.97px;font-size:14px;letter-spacing:0.135px;color:#000;">Iphone 13</div>
<div class="t" style="left:435.00px;top:692.97px;font-size:14px;letter-spacing:0.255px;color:#000;">Airpod</div>
<div class="t" style="left:429.00px;top:721.97px;font-size:14px;letter-spacing:0.265px;color:#000;">Headset</div>
<div class="t" style="left:429.00px;top:750.97px;font-size:14px;letter-spacing:0.443px;color:#000;">Moderm</div>
<div class="t" style="left:411.25px;top:779.97px;font-size:14px;letter-spacing:0.000px;color:#000;">Tecno Spark 2</div>
<div class="t" style="left:596.50px;top:516.42px;font-size:14.5px;letter-spacing:0.105px;color:#000;font-weight:bold;">Price</div>
<div class="t" style="left:715.00px;top:516.42px;font-size:14.5px;letter-spacing:0.774px;color:#000;font-weight:bold;">Quantity</div>
<div class="t" style="left:857.00px;top:516.42px;font-size:14.5px;letter-spacing:0.688px;color:#000;font-weight:bold;">Total</div>
<div class="t" style="left:588.85px;top:547.72px;font-size:14.3px;color:#000;">270,000</div>
<div class="t" style="left:743.52px;top:547.72px;font-size:14.3px;color:#000;">6</div>
<div class="t" style="left:847.86px;top:546.02px;font-size:14.3px;color:#000;">1620000</div>
<div class="t" style="left:592.83px;top:576.72px;font-size:14.3px;color:#000;">17,450</div>
<div class="t" style="left:743.52px;top:576.72px;font-size:14.3px;color:#000;">9</div>
<div class="t" style="left:851.84px;top:575.02px;font-size:14.3px;color:#000;">157050</div>
<div class="t" style="left:596.81px;top:605.72px;font-size:14.3px;color:#000;">4,500</div>
<div class="t" style="left:739.55px;top:605.72px;font-size:14.3px;color:#000;">12</div>
<div class="t" style="left:855.82px;top:604.02px;font-size:14.3px;color:#000;">54000</div>
<div class="t" style="left:592.83px;top:634.72px;font-size:14.3px;color:#000;">25,000</div>
<div class="t" style="left:743.52px;top:634.72px;font-size:14.3px;color:#000;">9</div>
<div class="t" style="left:851.84px;top:633.02px;font-size:14.3px;color:#000;">225000</div>
<div class="t" style="left:588.85px;top:663.72px;font-size:14.3px;color:#000;">300,000</div>
<div class="t" style="left:743.52px;top:663.72px;font-size:14.3px;color:#000;">6</div>
<div class="t" style="left:847.86px;top:662.02px;font-size:14.3px;color:#000;">1800000</div>
<div class="t" style="left:592.83px;top:692.72px;font-size:14.3px;color:#000;">15,000</div>
<div class="t" style="left:743.52px;top:692.72px;font-size:14.3px;color:#000;">1</div>
<div class="t" style="left:855.82px;top:691.02px;font-size:14.3px;color:#000;">15000</div>
<div class="t" style="left:596.81px;top:721.72px;font-size:14.3px;color:#000;">3,500</div>
<div class="t" style="left:743.52px;top:721.72px;font-size:14.3px;color:#000;">4</div>
<div class="t" style="left:855.82px;top:720.02px;font-size:14.3px;color:#000;">14000</div>
<div class="t" style="left:592.83px;top:750.72px;font-size:14.3px;color:#000;">17,500</div>
<div class="t" style="left:743.52px;top:750.72px;font-size:14.3px;color:#000;">6</div>
<div class="t" style="left:851.84px;top:749.02px;font-size:14.3px;color:#000;">105000</div>
<div class="t" style="left:592.83px;top:779.72px;font-size:14.3px;color:#000;">35,000</div>
<div class="t" style="left:743.52px;top:779.72px;font-size:14.3px;color:#000;">1</div>
<div class="t" style="left:855.82px;top:778.02px;font-size:14.3px;color:#000;">35000</div>
<div class="a" style="left:942px;top:710px;width:101px;height:32px;border:2px solid #217346;"></div>
<div class="a" style="left:1037px;top:736px;width:8px;height:8px;background:#217346;border:1px solid #fff;"></div>
<div class="a" style="left:1445px;top:510px;width:89px;height:60px;overflow:hidden"><div class="t" style="left:13px;top:18px;font-size:31.5px;color:#b4b4b4;letter-spacing:-.4px">Click to add data</div></div>
<svg style="left:1498px;top:716px" width="21" height="21" viewBox="0 0 21 21"><path d="M7.5 1 H13.5 V7.5 H20 V13.5 H13.5 V20 H7.5 V13.5 H1 V7.5 H7.5 Z" fill="#fff" stroke="#000" stroke-width="1.3"/><path d="M8.5 20.8 H14.3 V14.3 H20.8 V8.5" fill="none" stroke="#000" stroke-width="1.2"/></svg>
<div class="a" style="left:1538px;top:308px;width:25px;height:643px;background:#d4d4d4;"></div>
<div class="a" style="left:1538px;top:308px;width:25px;height:26px;background:#fff;border:1px solid #ababab;"></div>
<svg style="left:1544.5px;top:317px" width="12" height="8" viewBox="0 0 12 8"><path d="M0.5 7.5 H11.5 L6 1 Z" fill="#606060"/></svg>
<div class="a" style="left:1538px;top:333px;width:25px;height:564px;background:#fff;border:1px solid #ababab;"></div>
<div class="a" style="left:1538px;top:926px;width:25px;height:26px;background:#fff;border:1px solid #ababab;"></div>
<svg style="left:1544.5px;top:935px" width="12" height="8" viewBox="0 0 12 8"><path d="M0.5 0.5 H11.5 L6 7 Z" fill="#606060"/></svg>
<!-- status -->
<div class="a" style="left:2px;top:951px;width:1564px;height:35px;background:#e6e6e6;border-top:1px solid #ababab;"></div>
<svg style="left:30px;top:960px" width="8" height="13" viewBox="0 0 8 13"><path d="M7.5 0.5 V12 L1 6.2 Z" fill="#c4c4c4"/></svg>
<svg style="left:64px;top:960px" width="8" height="13" viewBox="0 0 8 13"><path d="M0.5 0.5 V12 L7 6.2 Z" fill="#c4c4c4"/></svg>
<div class="a" style="left:120px;top:951px;width:90px;height:32px;background:#fff;border-bottom:2.5px solid #217346;border-left:1px solid #c8c8c8;border-right:1px solid #c8c8c8;"></div>
<div class="t" style="left:132.00px;top:956.74px;font-size:20px;letter-spacing:-0.265px;color:#217346;font-weight:bold;">Sheet1</div>
<svg style="left:247.5px;top:956.5px" width="22" height="22" viewBox="0 0 22 22"><circle cx="11" cy="11" r="10" fill="none" stroke="#bdbdbd" stroke-width="1.2"/><path d="M11 6.5 V15.5 M6.5 11 H15.5" stroke="#bdbdbd" stroke-width="1.3"/></svg>
<div class="a" style="left:937.5px;top:961px;width:2px;height:2px;background:#a8a8a8;"></div>
<div class="a" style="left:937.5px;top:966.5px;width:2px;height:2px;background:#a8a8a8;"></div>
<div class="a" style="left:937.5px;top:972px;width:2px;height:2px;background:#a8a8a8;"></div>
<div class="a" style="left:957px;top:955px;width:580px;height:26px;background:#d4d4d4;"></div>
<div class="a" style="left:957px;top:955px;width:26px;height:26px;background:#fff;border:1px solid #ababab;"></div>
<svg style="left:965px;top:962px" width="8" height="12" viewBox="0 0 8 12"><path d="M7.5 0.5 V11.5 L1 6 Z" fill="#606060"/></svg>
<div class="a" style="left:982px;top:955px;width:472px;height:26px;background:#fff;border:1px solid #ababab;"></div>
<div class="a" style="left:1511px;top:955px;width:26px;height:26px;background:#fff;border:1px solid #ababab;"></div>
<svg style="left:1520px;top:962px" width="8" height="12" viewBox="0 0 8 12"><path d="M0.5 0.5 V11.5 L7 6 Z" fill="#606060"/></svg>
<div class="a" style="left:2px;top:985px;width:1564px;height:33px;background:#f3f2f1;border-top:1px solid #d0d0d0;"></div>
<div class="t" style="left:12.50px;top:994.94px;font-size:15.5px;letter-spacing:-0.561px;">Ready</div>
<svg style="left:83px;top:992.5px" width="23" height="20" viewBox="0 0 23 20"><path d="M11 17.3 H0.9 V1 H20.8 V7.5" fill="none" stroke="#444" stroke-width="1.5"/><path d="M0.9 4.6 H20.8" stroke="#444" stroke-width="1.4"/><path d="M3.5 7.8 h5.2 M3.5 10.7 h3.6 M3.5 13.6 h3" stroke="#444" stroke-width="1.5"/><circle cx="14.7" cy="13.2" r="6" fill="#f3f2f1" stroke="#444" stroke-width="1.5"/><circle cx="14.7" cy="13.2" r="2.9" fill="#444"/></svg>
<svg style="left:130px;top:991px" width="24" height="23" viewBox="0 0 24 23"><circle cx="9.4" cy="3.9" r="2.6" fill="none" stroke="#444" stroke-width="1.4"/><path d="M9.4 7.4 C6.5 7.4,4 5.4,2.2 5.2 C0.6 5.2,0.2 7.3,1.6 8 L5.9 9.9 V13.4 L3.4 19.6 C3.2 21.2,5.4 21.6,6.3 20.2 M9.4 7.4 C12.3 7.4,14.8 5.4,16.6 5.2 C18.2 5.2,18.6 7.3,17.2 8 L13.2 9.8 V13.6" fill="none" stroke="#444" stroke-width="1.4" stroke-linecap="round" stroke-linejoin="round"/><path d="M10 16.4 L14.6 21 L22.4 13" fill="none" stroke="#444" stroke-width="1.5"/></svg>
<div class="t" style="left:156.50px;top:994.94px;font-size:15.5px;letter-spacing:-0.049px;">Accessibility: Good to go</div>
<div class="t" style="left:353.00px;top:994.94px;font-size:15.5px;letter-spacing:-0.299px;">Page: 1 of 1</div>
<svg style="left:1123px;top:991.5px" width="21" height="19" viewBox="0 0 21 19"><rect x="0.7" y="0.7" width="19" height="17.6" fill="none" stroke="#444" stroke-width="1.4"/><path d="M0.7 6.5 H19.7 M0.7 12.5 H19.7 M7 0.7 V18.3 M13.5 0.7 V18.3" stroke="#444" stroke-width="1.2"/></svg>
<div class="a" style="left:1164px;top:986px;width:60px;height:32px;background:#d0cecc;"></div>
<svg style="left:1183px;top:991.5px" width="22" height="20" viewBox="0 0 22 20"><rect x="0.8" y="0.8" width="20.4" height="18" fill="none" stroke="#444" stroke-width="1.5"/><rect x="5.2" y="4.2" width="11.6" height="11.4" fill="none" stroke="#444" stroke-width="1.2"/><path d="M7.5 7.5 h7 M7.5 10 h7 M7.5 12.5 h7" stroke="#444" stroke-width="1.1"/></svg>
<svg style="left:1243px;top:991.5px" width="22" height="20" viewBox="0 0 22 20"><path d="M0.8 0.8 H21.2 V18.8 H0.8 Z" fill="none" stroke="#444" stroke-width="1.4"/><path d="M4 0.8 V11 H14 V0.8 M9 0.8 V11" fill="none" stroke="#444" stroke-width="1.2"/></svg>
<div class="a" style="left:1291.5px;top:1001.5px;width:12.5px;height:1.4px;background:#444;"></div>
<div class="a" style="left:1311.5px;top:1001.5px;width:148.5px;height:1.4px;background:#444;"></div>
<div class="a" style="left:1381.5px;top:992.5px;width:8.5px;height:18px;background:#6e6e6e;"></div>
<div class="a" style="left:1467.5px;top:1001.5px;width:12.5px;height:1.4px;background:#444;"></div>
<div class="a" style="left:1473px;top:996px;width:1.4px;height:12.5px;background:#444;"></div>
<div class="t" style="left:1499.00px;top:994.94px;font-size:15.5px;letter-spacing:-0.286px;">100%</div>
<div class="a" style="left:0;top:53px;width:2px;height:967px;background:#217346"></div><div class="a" style="left:1566px;top:53px;width:2px;height:967px;background:#217346"></div><div class="a" style="left:0;top:1018px;width:1568px;height:2px;background:#217346"></div>
</body>
</html>
